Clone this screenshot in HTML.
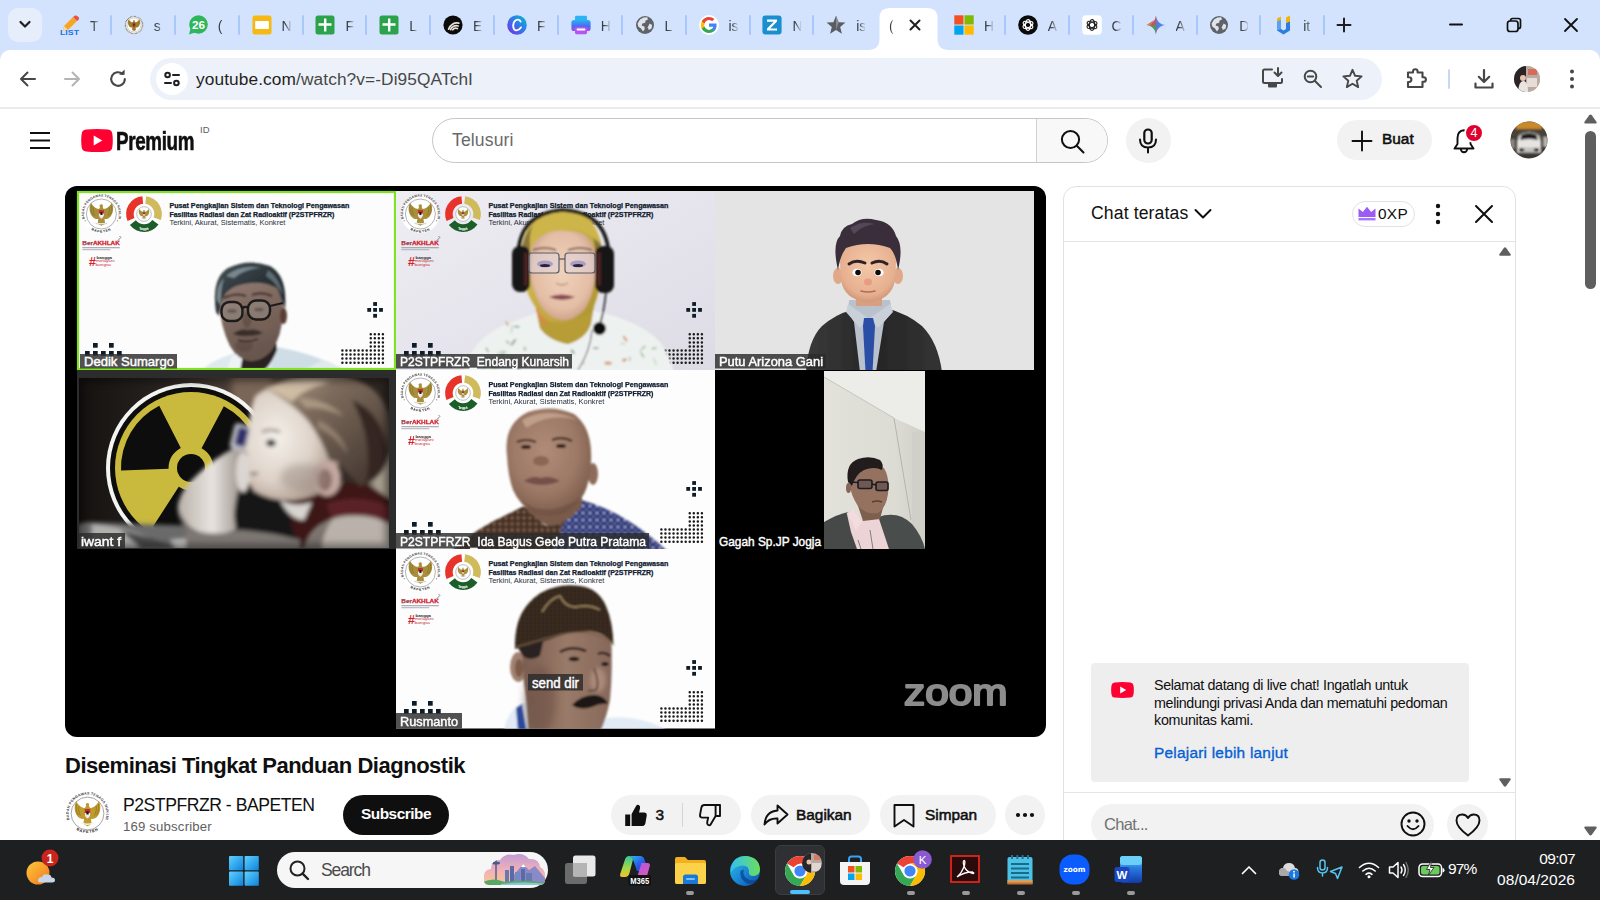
<!DOCTYPE html>
<html lang="id">
<head>
<meta charset="utf-8">
<title>Diseminasi Tingkat Panduan Diagnostik - YouTube</title>
<style>
*{box-sizing:border-box;margin:0;padding:0}
html,body{width:1600px;height:900px;overflow:hidden;background:#fff;font-family:"Liberation Sans",sans-serif;color:#0f0f0f}
.abs{position:absolute}
#root{position:relative;width:1600px;height:900px;overflow:hidden;background:#fff}
/* chrome */
#tabstrip{position:absolute;left:0;top:0;width:1600px;height:62px;background:#d3e3fd}
#toolbar{position:absolute;left:0;top:50px;width:1600px;height:58px;background:#fff;border-radius:10px 10px 0 0}
#tbline{position:absolute;left:0;top:107px;width:1600px;height:2px;background:#ebebeb}
.tab{position:absolute;top:0;height:50px;width:64px}
.tab svg{position:absolute;left:0;top:15px;width:20px;height:20px}
.tab span{position:absolute;left:30px;top:14px;width:9px;height:24px;overflow:hidden;font-size:14px;line-height:24px;color:#3c4043;white-space:nowrap;-webkit-mask-image:linear-gradient(90deg,#000 35%,rgba(0,0,0,.15) 100%);mask-image:linear-gradient(90deg,#000 35%,rgba(0,0,0,.15) 100%)}
.tab i{position:absolute;left:50px;top:15px;width:2px;height:20px;background:#a8c7fa;border-radius:1px}
#omni{position:absolute;left:150px;top:58px;width:1232px;height:42px;border-radius:21px;background:#edf2fa}
#url{position:absolute;left:196px;top:66px;font-size:17.3px;line-height:26px;color:#1f1f1f;white-space:nowrap;letter-spacing:0.1px}
#url b{font-weight:normal;color:#474747}
/* yt */
.pill{position:absolute;background:#f2f2f2;border-radius:20px}
.t{position:absolute;white-space:nowrap}
/* taskbar */
#taskbar{position:absolute;left:0;top:840px;width:1600px;height:60px;background:#1e1f20}
.dot{position:absolute;top:51px;width:8px;height:4px;border-radius:2px;background:#9a9a9a}
</style>
</head>
<body>
<div id="root">
<div id="tabstrip">
<div class="abs" style="left:8px;top:8px;width:34px;height:34px;border-radius:10px;background:#e6eefc"></div>
<svg class="abs" style="left:17px;top:18px" width="16" height="14" viewBox="0 0 16 14"><path d="M3.500 4 L8 8.500 L12.500 4" fill="none" stroke="#1f1f1f" stroke-width="2.200" stroke-linecap="round" stroke-linejoin="round"/></svg>
<div class="tab" style="left:60.0px"><svg viewBox="0 0 20 20"><path d="M4 11 L13 2 L17 6 L8 15 L3 16 Z" fill="#f6a623"/><path d="M13 2 L15 0.6 Q16.5 0 17.6 1.2 L18.8 2.6 Q19.6 4 18.4 5 L17 6 Z" fill="#e8504a"/><path d="M3 16 L4 11 L8 15 Z" fill="#f3d9a8"/><text x="0" y="19.5" font-family="Liberation Sans, sans-serif" font-weight="bold" font-size="7.5" fill="#1a73e8" textLength="19" lengthAdjust="spacingAndGlyphs">LIST</text></svg><span>T</span><i></i></div>
<div class="tab" style="left:123.8px"><svg viewBox="0 0 20 20"><circle cx="10" cy="10" r="9.400" fill="#fff"/><circle cx="10" cy="10" r="8.600" fill="none" stroke="#666" stroke-width="1.400" stroke-dasharray="0.700 0.600"/><circle cx="10" cy="10" r="7" fill="#fff" stroke="#888" stroke-width=".4"/><g transform="translate(10 9.800) scale(0.540)"><path d="M0 -9 C1.500 -9 1.800 -7.500 1.200 -6.500 L2.200 -4.500 C5 -4.500 8 -7 10 -10.500 C12.200 -6 11.500 -1 9 2.500 C7 5 4.500 5.500 3 5 L3.600 9.500 L0 11.500 L-3.600 9.500 L-3 5 C-4.500 5.500 -7 5 -9 2.500 C-11.500 -1 -12.200 -6 -10 -10.500 C-8 -7 -5 -4.500 -2.200 -4.500 L-1.200 -6.500 C-1.800 -7.500 -1.500 -9 0 -9Z" fill="#9a7e2a"/><path d="M-2.400 -3.600 H2.400 V1.400 Q2.400 3.800 0 5 Q-2.400 3.800 -2.400 1.400Z" fill="#c2302a"/><rect x="-1" y="-1.600" width="2" height="2.800" fill="#1a1a1a"/></g></svg><span>s</span><i></i></div>
<div class="tab" style="left:187.7px"><svg viewBox="0 0 20 20"><circle cx="10.5" cy="9.5" r="9.3" fill="#2fb55a"/><path d="M1 19.5 L2.5 13.5 L7 17.5 Z" fill="#2fb55a"/><text x="10.5" y="13.6" text-anchor="middle" font-family="Liberation Sans, sans-serif" font-weight="bold" font-size="11" fill="#fff" textLength="13" lengthAdjust="spacingAndGlyphs">26</text></svg><span>(</span><i></i></div>
<div class="tab" style="left:251.6px"><svg viewBox="0 0 20 20"><rect x="0.5" y="0.5" width="19" height="19" rx="2.5" fill="#f5b912"/><rect x="3.2" y="6" width="13.6" height="8" rx="0.6" fill="#fff"/></svg><span>N</span><i></i></div>
<div class="tab" style="left:315.4px"><svg viewBox="0 0 20 20"><rect x="0.5" y="0.5" width="19" height="19" rx="2.5" fill="#2ba24c"/><path d="M9 3.5 H11.4 V8.3 H16.5 V10.7 H11.4 V16.5 H9 V10.7 H3.5 V8.3 H9 Z" fill="#fff"/></svg><span>F</span><i></i></div>
<div class="tab" style="left:379.2px"><svg viewBox="0 0 20 20"><rect x="0.5" y="0.5" width="19" height="19" rx="2.5" fill="#2ba24c"/><path d="M9 3.5 H11.4 V8.3 H16.5 V10.7 H11.4 V16.5 H9 V10.7 H3.5 V8.3 H9 Z" fill="#fff"/></svg><span>L</span><i></i></div>
<div class="tab" style="left:443.1px"><svg viewBox="0 0 20 20"><circle cx="10" cy="10" r="9.6" fill="#0b0b0b"/><g fill="none" stroke="#e9e3d8" stroke-width="1.7" stroke-linecap="round"><path d="M5.6 14.2 A8.6 8.6 0 0 1 15.8 8.2"/><path d="M7.6 14.6 A6 6 0 0 1 15.2 11"/><path d="M9.8 14.8 A3.6 3.6 0 0 1 14.4 13.6"/></g></svg><span>E</span><i></i></div>
<div class="tab" style="left:506.9px"><svg viewBox="0 0 20 20"><defs><linearGradient id="cv" x1="0" y1="1" x2="1" y2="0"><stop offset="0" stop-color="#7d2ae8"/><stop offset=".55" stop-color="#2f7be8"/><stop offset="1" stop-color="#00c4cc"/></linearGradient></defs><circle cx="10" cy="10" r="9.8" fill="url(#cv)"/><path d="M13.6 6.6 Q12.8 4.4 10.6 4.6 Q6.6 5.2 6.2 10.4 Q6.2 15.2 9.6 15.4 Q12.4 15.2 14 12.4" fill="none" stroke="#fff" stroke-width="1.9" stroke-linecap="round"/></svg><span>F</span><i></i></div>
<div class="tab" style="left:570.8px"><svg viewBox="0 0 20 20"><defs><linearGradient id="pr" x1="0" y1="0" x2="0" y2="1"><stop offset="0" stop-color="#2bb3f3"/><stop offset=".55" stop-color="#4a6cf0"/><stop offset="1" stop-color="#a44cf0"/></linearGradient></defs><rect x="4" y="0.8" width="12" height="6" rx="1.4" fill="#2bb3f3"/><rect x="0.4" y="5" width="19.2" height="11" rx="2.6" fill="url(#pr)"/><rect x="4" y="12" width="12" height="7.2" rx="1.4" fill="#b455ef"/><rect x="5.6" y="13.4" width="8.8" height="2.2" rx="1" fill="#fff"/></svg><span>H</span><i></i></div>
<div class="tab" style="left:634.6px"><svg viewBox="0 0 20 20"><circle cx="10" cy="10" r="9" fill="#5f6368"/><path d="M8.6 2.4 L12.2 2.2 L13 4.6 L10.6 5.6 L10.2 7.8 L7.4 8.4 L6.6 10.4 L9.4 11.4 L9.8 14 L8 16.6 L6 13.4 L3.2 11.6 L2.6 8.4 L5 4.4 Z" fill="#dfe3ea"/><path d="M14.6 8.6 L17.2 10 L16.6 13.4 L13.8 15 L12.8 12.2 Z" fill="#dfe3ea"/></svg><span>L</span><i></i></div>
<div class="tab" style="left:698.5px"><svg viewBox="0 0 20 20"><circle cx="10" cy="10" r="10" fill="#fff"/><path d="M17.6 10.2 c0-.6-.05-1.1-.15-1.6 H10 v3.1 h4.3 c-.2 1-.75 1.8-1.6 2.4 v2 h2.6 c1.5-1.4 2.3-3.4 2.3-5.9z" fill="#4285f4"/><path d="M10 18 c2.15 0 3.95-.7 5.3-1.9 l-2.6-2 c-.7.5-1.65.8-2.7.8 -2.1 0-3.85-1.4-4.5-3.3 H2.8 v2.1 C4.1 16.3 6.85 18 10 18z" fill="#34a853"/><path d="M5.5 11.6 c-.15-.5-.25-1-.25-1.6 s.1-1.100.25-1.600 V6.300 H2.800 C2.300 7.400 2 8.700 2 10 s.3 2.600.8 3.700 l2.700-2.100z" fill="#fbbc05"/><path d="M10 5.100 c1.200 0 2.250.4 3.100 1.200 l2.300-2.300 C14 2.700 12.150 2 10 2 6.850 2 4.100 3.700 2.800 6.300 l2.700 2.100 C6.150 6.500 7.900 5.100 10 5.100z" fill="#ea4335"/></svg><span>is</span><i></i></div>
<div class="tab" style="left:762.4px"><svg viewBox="0 0 20 20"><rect x="0.4" y="0.4" width="19.200" height="19.200" rx="3" fill="#1a8fd0"/><path d="M5 4.600 H15 V6.600 L8.200 13.400 H15 V15.600 H5 V13.600 L11.800 6.800 H5 Z" fill="#fff"/></svg><span>N</span><i></i></div>
<div class="tab" style="left:826.2px"><svg viewBox="0 0 20 20"><path d="M10 0.800 L12.600 7.200 L19.400 7.600 L14.200 12 L15.900 18.800 L10 15.100 L4.100 18.800 L5.800 12 L0.600 7.600 L7.400 7.200 Z" fill="#5a5d62"/><path d="M10 0.800 L12.600 7.200 L10 15.100 Z" fill="#8a8d92"/></svg><span>is</span></div>
<div class="tab" style="left:953.9px"><svg viewBox="0 0 20 20"><rect x="0.300" y="0.300" width="9.200" height="9.200" fill="#f25022"/><rect x="10.500" y="0.300" width="9.200" height="9.200" fill="#7fba00"/><rect x="0.300" y="10.500" width="9.200" height="9.200" fill="#00a4ef"/><rect x="10.500" y="10.500" width="9.200" height="9.200" fill="#ffb900"/></svg><span>H</span><i></i></div>
<div class="tab" style="left:1017.8px"><svg viewBox="0 0 20 20"><circle cx="10" cy="10" r="9.800" fill="#0b0b0b"/><g fill="none" stroke="#fff" stroke-width="1.100"><ellipse cx="10" cy="10" rx="2.600" ry="5.400"/><ellipse cx="10" cy="10" rx="2.600" ry="5.400" transform="rotate(60 10 10)"/><ellipse cx="10" cy="10" rx="2.600" ry="5.400" transform="rotate(120 10 10)"/></g></svg><span>A</span><i></i></div>
<div class="tab" style="left:1081.6px"><svg viewBox="0 0 20 20"><rect x="0.200" y="0.200" width="19.600" height="19.600" rx="4" fill="#fff"/><g fill="none" stroke="#222" stroke-width="1.100"><ellipse cx="10" cy="10" rx="2.600" ry="5.400"/><ellipse cx="10" cy="10" rx="2.600" ry="5.400" transform="rotate(60 10 10)"/><ellipse cx="10" cy="10" rx="2.600" ry="5.400" transform="rotate(120 10 10)"/></g></svg><span>C</span><i></i></div>
<div class="tab" style="left:1145.5px"><svg viewBox="0 0 20 20"><defs><linearGradient id="gm" x1="0" y1="0" x2="1" y2="1"><stop offset="0" stop-color="#ea4335"/><stop offset=".35" stop-color="#f9ab00"/><stop offset=".6" stop-color="#34a853"/><stop offset="1" stop-color="#4285f4"/></linearGradient><linearGradient id="gm2" x1="0" y1="0" x2="1" y2="0"><stop offset="0" stop-color="#f9ab00"/><stop offset=".3" stop-color="#ea4335"/><stop offset=".65" stop-color="#4285f4"/><stop offset="1" stop-color="#4285f4"/></linearGradient></defs><path d="M10 0.400 C10.600 6 14 9.400 19.600 10 C14 10.600 10.600 14 10 19.600 C9.400 14 6 10.600 0.400 10 C6 9.400 9.400 6 10 0.400Z" fill="url(#gm2)"/><path d="M10 10 L10 19.600 C9.400 14 6 10.600 0.400 10 Z" fill="#34a853" opacity=".85"/><path d="M0.400 10 C6 9.400 9.400 6 10 0.400 L10 4 Z" fill="#ea4335" opacity=".8"/></svg><span>A</span><i></i></div>
<div class="tab" style="left:1209.3px"><svg viewBox="0 0 20 20"><circle cx="10" cy="10" r="9" fill="#5f6368"/><path d="M8.6 2.4 L12.2 2.2 L13 4.6 L10.6 5.6 L10.2 7.8 L7.4 8.4 L6.6 10.4 L9.4 11.4 L9.8 14 L8 16.6 L6 13.4 L3.2 11.6 L2.6 8.4 L5 4.4 Z" fill="#dfe3ea"/><path d="M14.6 8.6 L17.2 10 L16.6 13.4 L13.8 15 L12.8 12.2 Z" fill="#dfe3ea"/></svg><span>D</span><i></i></div>
<div class="tab" style="left:1273.2px"><svg viewBox="0 0 20 20"><path d="M4 6.500 L8 4.500 V14 L10.500 15.600 L13 14 V8 L17 6 V15.600 L10.500 19.600 L4 15.600 Z" fill="#2d7de0"/><path d="M4 6.500 L8 4.500 V14 L4 15.600Z" fill="#5aa2f0"/><path d="M4 3.600 L8 1.600 V4.600 L4 6.600Z" fill="#f5b400"/><path d="M13 2.400 L17 0.400 V6 L13 8Z" fill="#f5b400"/></svg><span>it</span><i></i></div>
<svg class="abs" style="left:868px;top:0" width="82" height="50" viewBox="0 0 82 50"><path d="M0 50 Q11.500 50 11.500 38.500 V18 Q11.500 8 21.500 8 H59.500 Q69.500 8 69.500 18 V38.500 Q69.500 50 81 50 Z" fill="#fff"/></svg>
<div class="tab" style="left:860px"><span style="left:29px;width:5px">(</span></div>
<svg class="abs" style="left:908px;top:18px" width="14" height="14" viewBox="0 0 14 14"><path d="M2.500 2.500 L11.500 11.500 M11.500 2.500 L2.500 11.500" stroke="#1f1f1f" stroke-width="2" stroke-linecap="round"/></svg>
<svg class="abs" style="left:1336px;top:17px" width="16" height="16" viewBox="0 0 16 16"><path d="M8 1.500 V14.500 M1.500 8 H14.500" stroke="#1f1f1f" stroke-width="2" stroke-linecap="round"/></svg>
<svg class="abs" style="left:1449px;top:23px" width="14" height="3" viewBox="0 0 14 3"><rect width="14" height="2" y="0.5" rx="1" fill="#111"/></svg>
<svg class="abs" style="left:1506px;top:17px" width="16" height="16" viewBox="0 0 16 16"><rect x="1.500" y="4" width="10.500" height="10.500" rx="2.600" fill="none" stroke="#111" stroke-width="1.700"/><path d="M4.600 4 V3.500 Q4.600 1.500 6.600 1.500 H12.500 Q14.500 1.500 14.500 3.500 V9.400 Q14.500 11.400 12.500 11.400 H12" fill="none" stroke="#111" stroke-width="1.700"/></svg>
<svg class="abs" style="left:1563px;top:17px" width="16" height="16" viewBox="0 0 16 16"><path d="M2 2 L14 14 M14 2 L2 14" stroke="#111" stroke-width="1.800" stroke-linecap="round"/></svg>
</div>
<div id="toolbar"></div><div id="tbline"></div>
<svg class="abs" style="left:18px;top:69px" width="20" height="20" viewBox="0 0 20 20"><path d="M17 10 H3.500 M9.500 3.500 L3 10 L9.500 16.500" fill="none" stroke="#474747" stroke-width="2" stroke-linecap="round" stroke-linejoin="round"/></svg>
<svg class="abs" style="left:62px;top:69px" width="20" height="20" viewBox="0 0 20 20"><path d="M3 10 H16.500 M10.500 3.500 L17 10 L10.500 16.500" fill="none" stroke="#b4b4b4" stroke-width="2" stroke-linecap="round" stroke-linejoin="round"/></svg>
<svg class="abs" style="left:107px;top:68px" width="22" height="22" viewBox="0 0 22 22"><path d="M17.800 11 A6.800 6.800 0 1 1 15.600 6" fill="none" stroke="#474747" stroke-width="2.100" stroke-linecap="round"/><path d="M12.200 6.800 H17.600 V1.600 Z" fill="#474747"/></svg>
<div id="omni"></div>
<div class="abs" style="left:156px;top:63px;width:32px;height:32px;border-radius:16px;background:#fff"></div>
<svg class="abs" style="left:162px;top:69px" width="20" height="20" viewBox="0 0 20 20"><g fill="none" stroke="#1f1f1f" stroke-width="2" stroke-linecap="round"><circle cx="5.600" cy="6" r="2.300"/><path d="M11 6 H17"/><circle cx="14.400" cy="14" r="2.300"/><path d="M3 14 H9"/></g></svg>
<div id="url" class="t">youtube.com<b>/watch?v=-Di95QATchI</b></div>
<svg class="abs" style="left:1261px;top:66px" width="24" height="24" viewBox="0 0 24 24"><g fill="none" stroke="#474747" stroke-width="2" stroke-linejoin="round" stroke-linecap="round"><path d="M11 3.500 H3.500 Q2 3.500 2 5 V15.500 Q2 17 3.500 17 H19.500 Q21 17 21 15.500 V13"/><path d="M8 20.500 H15"/><path d="M17 2 V9.500 M13.500 6.500 L17 10 L20.500 6.500"/></g><rect x="7" y="17" width="9" height="3.500" fill="#474747"/></svg>
<svg class="abs" style="left:1302px;top:68px" width="22" height="22" viewBox="0 0 22 22"><g fill="none" stroke="#474747" stroke-width="2" stroke-linecap="round"><circle cx="8.500" cy="8.500" r="5.800"/><path d="M13 13 L19 19"/><path d="M5.800 8.500 H11.200"/></g></svg>
<svg class="abs" style="left:1341px;top:67px" width="23" height="23" viewBox="0 0 23 23"><path d="M11.500 2.800 L14.100 8.800 L20.600 9.400 L15.700 13.700 L17.200 20.100 L11.500 16.700 L5.800 20.100 L7.300 13.700 L2.400 9.400 L8.900 8.800 Z" fill="none" stroke="#474747" stroke-width="1.900" stroke-linejoin="round"/></svg>
<svg class="abs" style="left:1404px;top:66px" width="25" height="25" viewBox="0 0 25 25"><path d="M4 6.500 H9 V5.500 A2.300 2.300 0 0 1 13.600 5.500 V6.500 H18.500 V11.200 H19.600 A2.300 2.300 0 0 1 19.600 15.800 H18.500 V21 H4 V16 H5 A2.400 2.400 0 0 0 5 11.200 H4 Z" fill="none" stroke="#474747" stroke-width="2.100" stroke-linejoin="round"/></svg>
<div class="abs" style="left:1448px;top:69px;width:2px;height:20px;border-radius:1px;background:#c7d9f7"></div>
<svg class="abs" style="left:1472px;top:67px" width="24" height="24" viewBox="0 0 24 24"><g fill="none" stroke="#474747" stroke-width="2.200" stroke-linecap="round" stroke-linejoin="round"><path d="M12 3 V14.500 M6.800 9.800 L12 15 L17.200 9.800"/><path d="M3.500 16.500 V20.500 H20.500 V16.500"/></g></svg>
<svg class="abs" style="left:1514px;top:66px" width="26" height="26" viewBox="0 0 26 26"><defs><clipPath id="pfc"><circle cx="13" cy="13" r="13"/></clipPath></defs><g clip-path="url(#pfc)"><rect width="26" height="26" fill="#c9c2bd"/><rect x="0" y="0" width="12" height="26" fill="#2a2424"/><rect x="12" y="0" width="14" height="26" fill="#b9aaa4"/><rect x="14" y="3" width="9" height="6" fill="#d86a5a"/><rect x="13" y="12" width="10" height="9" fill="#e8ddd6"/><circle cx="9" cy="12" r="3" fill="#e4c4b0"/><path d="M4 26 Q5 15 9 15 Q14 15 14 26Z" fill="#e9e4e0"/></g></svg>
<svg class="abs" style="left:1568px;top:68px" width="8" height="22" viewBox="0 0 8 22"><circle cx="4" cy="3.500" r="2" fill="#474747"/><circle cx="4" cy="11" r="2" fill="#474747"/><circle cx="4" cy="18.500" r="2" fill="#474747"/></svg>
<!-- YouTube masthead -->
<svg class="abs" style="left:29px;top:131px" width="22" height="19" viewBox="0 0 22 19"><path d="M1 2 H21 M1 9.500 H21 M1 17 H21" stroke="#0f0f0f" stroke-width="1.800"/></svg>
<svg class="abs" style="left:81px;top:129px" width="32" height="23" viewBox="0 0 32 23"><path d="M5 0.600 Q16 -0.400 27 0.600 Q30.800 1 31.300 4.800 Q32.300 11.500 31.300 18.200 Q30.800 22 27 22.400 Q16 23.400 5 22.400 Q1.200 22 0.700 18.200 Q-0.300 11.500 0.700 4.800 Q1.200 1 5 0.600Z" fill="#ff0033"/><path d="M12.700 6.500 L21.300 11.500 L12.700 16.500Z" fill="#fff"/></svg>
<div id="prem" class="t" style="left:116px;top:125px;font-size:26px;line-height:32px;font-weight:bold;letter-spacing:-0.5px;transform:scaleX(0.724);transform-origin:0 0;color:#0f0f0f;-webkit-text-stroke:0.6px #0f0f0f">Premium</div>
<div class="t" style="left:200px;top:124px;font-size:9.500px;line-height:12px;color:#606060">ID</div>
<!-- search -->
<div class="abs" style="left:432px;top:118px;width:676px;height:45px;border-radius:23px;border:1px solid #c6c6c6;background:#fff"></div>
<div class="abs" style="left:1036px;top:119px;width:71px;height:43px;border-radius:0 22px 22px 0;border-left:1px solid #d3d3d3;background:#f8f8f8"></div>
<div id="telus" class="t" style="left:452px;top:129px;font-size:17.600px;line-height:22px;color:#6a6a6a;letter-spacing:0.125px">Telusuri</div>
<svg class="abs" style="left:1059px;top:128px" width="26" height="26" viewBox="0 0 26 26"><circle cx="11.500" cy="11.500" r="8.600" fill="none" stroke="#0f0f0f" stroke-width="2"/><path d="M17.800 17.800 L24.500 24.500" stroke="#0f0f0f" stroke-width="2" stroke-linecap="round"/></svg>
<div class="abs" style="left:1126px;top:118px;width:45px;height:45px;border-radius:23px;background:#f2f2f2"></div>
<svg class="abs" style="left:1137px;top:128px" width="22" height="26" viewBox="0 0 22 26"><rect x="7.300" y="1.500" width="7.400" height="14" rx="3.700" fill="none" stroke="#0f0f0f" stroke-width="2.200"/><path d="M3 11.500 Q3 19.500 11 19.500 Q19 19.500 19 11.500 M11 19.500 V24.500" fill="none" stroke="#0f0f0f" stroke-width="2" stroke-linecap="round"/></svg>
<!-- Buat -->
<div class="pill" style="left:1337px;top:120px;width:95px;height:40px"></div>
<svg class="abs" style="left:1351px;top:130px" width="22" height="22" viewBox="0 0 22 22"><path d="M11 1.500 V20.500 M1.500 11 H20.500" stroke="#0f0f0f" stroke-width="1.900" stroke-linecap="round"/></svg>
<div id="buat" class="t" style="left:1382px;top:129px;font-size:15.400px;line-height:20px;font-weight:normal;-webkit-text-stroke:0.55px #0f0f0f;letter-spacing:0px">Buat</div>
<!-- bell -->
<svg class="abs" style="left:1451px;top:127px" width="26" height="28" viewBox="0 0 26 28"><path d="M13 3.200 Q19.500 3.800 19.500 11 V17 L22.500 21.500 H3.500 L6.500 17 V11 Q6.500 3.800 13 3.200Z" fill="none" stroke="#0f0f0f" stroke-width="1.900" stroke-linejoin="round"/><path d="M9.800 22 A3.200 3.200 0 0 0 16.200 22" fill="none" stroke="#0f0f0f" stroke-width="1.900"/></svg>
<div class="abs" style="left:1464px;top:123px;width:20px;height:20px;border-radius:10px;background:#e1002d;border:2px solid #fff"></div>
<div class="t" style="left:1464px;top:123px;width:20px;text-align:center;font-size:12.500px;line-height:20px;color:#fff">4</div>
<!-- avatar car -->
<svg class="abs" style="left:1510px;top:121px" width="38" height="38" viewBox="0 0 38 38"><defs><clipPath id="avc"><circle cx="19" cy="19" r="18.500"/></clipPath><filter id="b1"><feGaussianBlur stdDeviation="0.8"/></filter></defs><g clip-path="url(#avc)"><rect width="38" height="38" fill="#3a3630"/><g filter="url(#b1)"><rect x="6" y="0" width="26" height="10" fill="#c88a2a"/><rect x="0" y="8" width="38" height="8" fill="#4a4238"/><path d="M7 32 V21 Q7 17 11 13 Q19 9.500 27 13 Q31 17 31 21 V32Z" fill="#e6e4e0"/><path d="M11.500 13.500 Q19 10.500 26.500 13.500 L28 19 Q19 17 10 19Z" fill="#1c1c1e"/><rect x="9" y="27" width="20" height="4" fill="#2a2a2a"/><rect x="14" y="27.500" width="10" height="2.600" fill="#ddd"/><rect x="0" y="18" width="5" height="10" fill="#8a8680"/><rect x="33" y="16" width="5" height="10" fill="#b8b4ae"/></g></g></svg>
<!-- page scrollbar -->
<svg class="abs" style="left:1583px;top:113px" width="15" height="12" viewBox="0 0 15 12"><path d="M7.500 1.500 Q8.200 1.500 8.800 2.300 L13.600 9 Q14.200 10.400 12.800 10.500 H2.200 Q0.800 10.400 1.400 9 L6.200 2.300 Q6.800 1.500 7.500 1.500Z" fill="#5f5f5f"/></svg>
<div class="abs" style="left:1585px;top:131px;width:11px;height:158px;border-radius:6px;background:#5e5e5e"></div>
<svg class="abs" style="left:1583px;top:825px" width="15" height="12" viewBox="0 0 15 12"><path d="M7.500 10.500 Q8.200 10.500 8.800 9.700 L13.600 3 Q14.200 1.600 12.800 1.500 H2.200 Q0.800 1.600 1.400 3 L6.200 9.700 Q6.800 10.500 7.500 10.500Z" fill="#5f5f5f"/></svg>
<!-- video -->
<div id="video" class="abs" style="left:65px;top:186px;width:981px;height:551px;border-radius:12px;background:#000;overflow:hidden">
<svg width="981" height="551" viewBox="65 186 981 551" style="position:absolute;left:0;top:0">
<defs>
<path id="sealTop" d="M-16.600 5.400 A17.450 17.450 0 1 1 16.600 5.400"/>
<path id="sealBot" d="M-13.500 12.800 A18.600 18.600 0 0 0 13.500 12.800"/>
<filter id="bl1" x="-10%" y="-10%" width="120%" height="120%"><feGaussianBlur stdDeviation="1"/></filter>
<filter id="bl2" x="-10%" y="-10%" width="120%" height="120%"><feGaussianBlur stdDeviation="2"/></filter>
<filter id="bl3" x="-20%" y="-20%" width="140%" height="140%"><feGaussianBlur stdDeviation="3.500"/></filter>
<filter id="bl6" x="-20%" y="-20%" width="140%" height="140%"><feGaussianBlur stdDeviation="7"/></filter>
<filter id="bl05" x="-10%" y="-10%" width="120%" height="120%"><feGaussianBlur stdDeviation="0.550"/></filter>
<clipPath id="c1"><rect x="77" y="191" width="319" height="179"/></clipPath>
<clipPath id="c2"><rect x="396" y="191" width="319" height="179"/></clipPath>
<clipPath id="c3"><rect x="715" y="191" width="319" height="179"/></clipPath>
<clipPath id="c4"><rect x="77" y="370" width="319" height="179"/></clipPath>
<clipPath id="c5"><rect x="396" y="370" width="319" height="179"/></clipPath>
<clipPath id="c6"><rect x="824" y="371" width="101" height="178"/></clipPath>
<clipPath id="c8"><rect x="396" y="549" width="319" height="179.500"/></clipPath>
<linearGradient id="g2bg" x1="0" y1="0" x2="1" y2="1"><stop offset="0" stop-color="#efeef3"/><stop offset=".5" stop-color="#e6e4ec"/><stop offset="1" stop-color="#dddbe4"/></linearGradient>
<linearGradient id="hairD" x1="0" y1="0" x2="1" y2="1"><stop offset="0" stop-color="#465258"/><stop offset=".5" stop-color="#2a3338"/><stop offset="1" stop-color="#20262a"/></linearGradient>
<linearGradient id="faceD" x1="0" y1="0" x2="0.300" y2="1"><stop offset="0" stop-color="#96807a"/><stop offset=".45" stop-color="#806a60"/><stop offset="1" stop-color="#68564e"/></linearGradient>
<radialGradient id="faceE" cx=".5" cy=".45" r=".6"><stop offset="0" stop-color="#f0d2bc"/><stop offset=".7" stop-color="#e4bea6"/><stop offset="1" stop-color="#c89a80"/></radialGradient>
<linearGradient id="hij" x1="0" y1="0" x2="1" y2="1"><stop offset="0" stop-color="#d6bf55"/><stop offset=".6" stop-color="#c2a840"/><stop offset="1" stop-color="#a08828"/></linearGradient>
<radialGradient id="faceA" cx=".5" cy=".4" r=".65"><stop offset="0" stop-color="#f4c8a8"/><stop offset=".75" stop-color="#e6b090"/><stop offset="1" stop-color="#c88e70"/></radialGradient>
<linearGradient id="jackA" x1="0" y1="0" x2="1" y2="0"><stop offset="0" stop-color="#3a3a3a"/><stop offset=".5" stop-color="#262626"/><stop offset="1" stop-color="#333"/></linearGradient>
<linearGradient id="t4bg" x1="0" y1="0" x2="1" y2="0"><stop offset="0" stop-color="#14110f"/><stop offset=".3" stop-color="#2a2522"/><stop offset=".55" stop-color="#5a4c42"/><stop offset=".75" stop-color="#3a302a"/><stop offset="1" stop-color="#2a2420"/></linearGradient>
<radialGradient id="babyF" cx=".35" cy=".45" r=".7"><stop offset="0" stop-color="#f4f0ea"/><stop offset=".55" stop-color="#ddd2c8"/><stop offset="1" stop-color="#a08a7c"/></radialGradient>
<linearGradient id="babyH" x1="0" y1="0" x2="1" y2="1"><stop offset="0" stop-color="#b8a48e"/><stop offset=".35" stop-color="#7c6a5c"/><stop offset="1" stop-color="#3a2e28"/></linearGradient>
<linearGradient id="armG" x1="0" y1="0" x2="1" y2="0"><stop offset="0" stop-color="#b8b0aa"/><stop offset=".5" stop-color="#e8e4e0"/><stop offset="1" stop-color="#8a807a"/></linearGradient>
<clipPath id="c4i"><rect x="79" y="378" width="310" height="170"/></clipPath>
<radialGradient id="faceI" cx=".45" cy=".4" r=".65"><stop offset="0" stop-color="#b08c78"/><stop offset=".6" stop-color="#9c7966"/><stop offset="1" stop-color="#7a5a4a"/></radialGradient>
<pattern id="batikB" width="7" height="7" patternUnits="userSpaceOnUse"><rect width="7" height="7" fill="#34407e"/><circle cx="2" cy="2" r="1.300" fill="#aab0d6"/><circle cx="5.500" cy="5.500" r="1" fill="#7a84b8"/></pattern>
<pattern id="batikR" width="6" height="6" patternUnits="userSpaceOnUse"><rect width="6" height="6" fill="#4e382c"/><circle cx="2" cy="2" r="1.200" fill="#8a6a50"/><circle cx="5" cy="4.500" r="0.900" fill="#2a1c16"/></pattern>
<linearGradient id="wall6" x1="0" y1="0" x2="1" y2="0"><stop offset="0" stop-color="#e2e2da"/><stop offset=".7" stop-color="#dcdcd4"/><stop offset="1" stop-color="#cfcfc8"/></linearGradient>
<linearGradient id="faceR" x1="0" y1="0" x2="1" y2="0"><stop offset="0" stop-color="#7a5e50"/><stop offset=".5" stop-color="#9a7a68"/><stop offset="1" stop-color="#86685a"/></linearGradient>
<pattern id="capP" width="4" height="4" patternUnits="userSpaceOnUse"><rect width="4" height="4" fill="#33261c"/><circle cx="1" cy="1" r="0.800" fill="#5a4632"/><circle cx="3" cy="3" r="0.700" fill="#241a12"/></pattern>
</defs>
<g clip-path="url(#c1)">
<rect x="77" y="191" width="319" height="179" fill="#fcfcfc"/>
<circle cx="101.4" cy="214.0" r="19.200" fill="#fff"/>
<circle cx="101.4" cy="214.0" r="15" fill="none" stroke="#666" stroke-width="0.500"/>
<g transform="translate(101.4 214.0)"><text font-family="Liberation Sans, sans-serif" font-weight="bold" font-size="3.300" fill="#3c3c3c" letter-spacing="0.150"><textPath href="#sealTop" startOffset="50%" text-anchor="middle">BADAN PENGAWAS TENAGA NUKLIR</textPath></text><text font-family="Liberation Sans, sans-serif" font-weight="bold" font-size="3.400" fill="#222" letter-spacing="0.700"><textPath href="#sealBot" startOffset="50%" text-anchor="middle">BAPETEN</textPath></text><circle cx="-16.300" cy="6.800" r="0.500" fill="#444"/><circle cx="16.300" cy="6.800" r="0.500" fill="#444"/></g>
<g transform="translate(101.40 213.70) scale(1.040)"><path d="M0 -9 C1.500 -9 1.800 -7.500 1.200 -6.500 L2.200 -4.500 C5 -4.500 8 -7 10 -10.500 C12.200 -6 11.500 -1 9 2.500 C7 5 4.500 5.500 3 5 L3.600 9.500 L0 11.500 L-3.600 9.500 L-3 5 C-4.500 5.500 -7 5 -9 2.500 C-11.500 -1 -12.200 -6 -10 -10.500 C-8 -7 -5 -4.500 -2.200 -4.500 L-1.200 -6.500 C-1.800 -7.500 -1.500 -9 0 -9Z" fill="#a8903a"/><path d="M9.600 -8 C10.400 -4 9.800 -1 8 1.800 M7.600 -6.200 C8.200 -3 7.600 -0.500 6.200 2 M-9.600 -8 C-10.400 -4 -9.800 -1 -8 1.800 M-7.600 -6.200 C-8.200 -3 -7.600 -0.500 -6.200 2" fill="none" stroke="#7a6420" stroke-width="0.500"/><path d="M-1.400 -8 L-2.600 -7.400 L-1.200 -7.100Z" fill="#a8903a"/><path d="M-2.400 -3.600 H2.400 V1.400 Q2.400 3.800 0 5 Q-2.400 3.800 -2.400 1.400Z" fill="#c2302a"/><path d="M-2.400 -0.200 H2.400 V1.400 Q2.400 3.800 0 5 Q-2.400 3.800 -2.400 1.400Z" fill="#f0ece4"/><rect x="-1" y="-1.600" width="2" height="2.800" fill="#1a1a1a"/><path d="M-5.600 8.600 Q0 11 5.600 8.600" fill="none" stroke="#f4f4f0" stroke-width="1.300"/><path d="M-5.600 8.600 Q0 11 5.600 8.600" fill="none" stroke="#777" stroke-width="0.300" transform="translate(0 0.800)"/></g>
<path d="M127.52 220.99 A17.90 17.90 0 0 1 142.44 196.17 L143.10 203.74 A10.30 10.30 0 0 0 134.52 218.02 Z" fill="#e8332a"/>
<path d="M146.18 196.23 A17.90 17.90 0 0 1 160.82 220.12 L153.68 217.52 A10.30 10.30 0 0 0 145.26 203.78 Z" fill="#cfba5c"/>
<path d="M158.48 224.52 A17.90 17.90 0 0 1 129.89 225.02 L135.88 220.34 A10.30 10.30 0 0 0 152.33 220.05 Z" fill="#1b5e2a"/>
<circle cx="144.0" cy="214.0" r="7.300" fill="#fff" stroke="#b0b0b8" stroke-width="0.800"/>
<g transform="translate(144.00 213.80) scale(0.460)"><path d="M0 -9 C1.500 -9 1.800 -7.500 1.200 -6.500 L2.200 -4.500 C5 -4.500 8 -7 10 -10.500 C12.200 -6 11.500 -1 9 2.500 C7 5 4.500 5.500 3 5 L3.600 9.500 L0 11.500 L-3.600 9.500 L-3 5 C-4.500 5.500 -7 5 -9 2.500 C-11.500 -1 -12.200 -6 -10 -10.500 C-8 -7 -5 -4.500 -2.200 -4.500 L-1.200 -6.500 C-1.800 -7.500 -1.500 -9 0 -9Z" fill="#a8903a"/><path d="M-2.400 -3.600 H2.400 V1.400 Q2.400 3.800 0 5 Q-2.400 3.800 -2.400 1.400Z" fill="#c2302a"/><path d="M-2.400 -0.200 H2.400 V1.400 Q2.400 3.800 0 5 Q-2.400 3.800 -2.400 1.400Z" fill="#f0ece4"/><rect x="-1" y="-1.600" width="2" height="2.800" fill="#1a1a1a"/><path d="M-5.600 8.600 Q0 11 5.600 8.600" fill="none" stroke="#f4f4f0" stroke-width="1.300"/><path d="M-5.600 8.600 Q0 11 5.600 8.600" fill="none" stroke="#777" stroke-width="0.300" transform="translate(0 0.800)"/></g>
<text x="144.0" y="230.3" text-anchor="middle" font-family="Liberation Sans, sans-serif" font-weight="bold" font-size="3.200" fill="#f0f6ea" textLength="9.500">Tangguh</text>
<text x="169.4" y="207.9" font-family="Liberation Sans, sans-serif" font-weight="bold" font-size="6.500" fill="#101c30" stroke="#101c30" stroke-width="0.250" textLength="180" lengthAdjust="spacingAndGlyphs">Pusat Pengkajian Sistem dan Teknologi Pengawasan</text>
<text x="169.4" y="216.7" font-family="Liberation Sans, sans-serif" font-weight="bold" font-size="6.500" fill="#101c30" stroke="#101c30" stroke-width="0.250" textLength="165" lengthAdjust="spacingAndGlyphs">Fasilitas Radiasi dan Zat Radioaktif (P2STPFRZR)</text>
<text x="169.4" y="225.2" font-family="Liberation Sans, sans-serif" font-size="6.600" fill="#2a3340" textLength="116" lengthAdjust="spacingAndGlyphs">Terkini, Akurat, Sistematis, Konkret</text>
<text x="82.3" y="245.3" font-family="Liberation Sans, sans-serif" font-weight="bold" font-size="6.200" textLength="37.500" lengthAdjust="spacingAndGlyphs"><tspan fill="#a83a4a" stroke="#a83a4a" stroke-width="0.250">Ber</tspan><tspan fill="#d0242e" stroke="#d0242e" stroke-width="0.300">AKHLAK</tspan></text>
<path d="M117.5 241.0 l3.400 -3.600 l-1.400 -1.400" fill="none" stroke="#3a3a3a" stroke-width="0.600"/>
<rect x="82.3" y="247.3" width="37.500" height="0.900" fill="#8a9098"/>
<rect x="82.3" y="249.3" width="28" height="0.900" fill="#a0a6ae"/>
<text x="88.8" y="266.0" font-family="Liberation Sans, sans-serif" font-weight="bold" font-style="italic" font-size="12.500" fill="#d0242e">#</text>
<text x="96.5" y="258.6" font-family="Liberation Sans, sans-serif" font-weight="bold" font-size="3.800" fill="#2a2a2a" textLength="15.500" lengthAdjust="spacingAndGlyphs">bangga</text>
<text x="96.0" y="262.3" font-family="Liberation Sans, sans-serif" font-size="3.800" fill="#c8323a" textLength="18.500" lengthAdjust="spacingAndGlyphs">melayani</text>
<text x="95.5" y="266.0" font-family="Liberation Sans, sans-serif" font-size="3.800" fill="#c8323a" textLength="15.500" lengthAdjust="spacingAndGlyphs">bangsa</text>
<rect x="93.0" y="343.0" width="4.700" height="4.700" fill="#0c1c28"/>
<rect x="109.0" y="343.0" width="4.700" height="4.700" fill="#0c1c28"/>
<rect x="85.0" y="351.0" width="4.700" height="4.700" fill="#0c1c28"/>
<rect x="93.0" y="351.0" width="4.700" height="4.700" fill="#0c1c28"/>
<rect x="101.0" y="351.0" width="4.700" height="4.700" fill="#0c1c28"/>
<rect x="109.0" y="351.0" width="4.700" height="4.700" fill="#0c1c28"/>
<rect x="117.0" y="351.0" width="4.700" height="4.700" fill="#0c1c28"/>
<rect x="373.2" y="308.0" width="3.800" height="3.800" fill="#0c1c28"/>
<rect x="367.3" y="308.0" width="3.800" height="3.800" fill="#0c1c28"/>
<rect x="379.1" y="308.0" width="3.800" height="3.800" fill="#0c1c28"/>
<rect x="373.2" y="302.1" width="3.800" height="3.800" fill="#0c1c28"/>
<rect x="373.2" y="313.9" width="3.800" height="3.800" fill="#0c1c28"/>
<path d="M369.50 334.30a1.250 1.250 0 1 0 2.500 0a1.250 1.250 0 1 0 -2.500 0zM373.55 334.30a1.250 1.250 0 1 0 2.500 0a1.250 1.250 0 1 0 -2.500 0zM377.60 334.30a1.250 1.250 0 1 0 2.500 0a1.250 1.250 0 1 0 -2.500 0zM381.65 334.30a1.250 1.250 0 1 0 2.500 0a1.250 1.250 0 1 0 -2.500 0zM369.50 338.35a1.250 1.250 0 1 0 2.500 0a1.250 1.250 0 1 0 -2.500 0zM373.55 338.35a1.250 1.250 0 1 0 2.500 0a1.250 1.250 0 1 0 -2.500 0zM377.60 338.35a1.250 1.250 0 1 0 2.500 0a1.250 1.250 0 1 0 -2.500 0zM381.65 338.35a1.250 1.250 0 1 0 2.500 0a1.250 1.250 0 1 0 -2.500 0zM369.50 342.40a1.250 1.250 0 1 0 2.500 0a1.250 1.250 0 1 0 -2.500 0zM373.55 342.40a1.250 1.250 0 1 0 2.500 0a1.250 1.250 0 1 0 -2.500 0zM377.60 342.40a1.250 1.250 0 1 0 2.500 0a1.250 1.250 0 1 0 -2.500 0zM381.65 342.40a1.250 1.250 0 1 0 2.500 0a1.250 1.250 0 1 0 -2.500 0zM369.50 346.45a1.250 1.250 0 1 0 2.500 0a1.250 1.250 0 1 0 -2.500 0zM373.55 346.45a1.250 1.250 0 1 0 2.500 0a1.250 1.250 0 1 0 -2.500 0zM377.60 346.45a1.250 1.250 0 1 0 2.500 0a1.250 1.250 0 1 0 -2.500 0zM381.65 346.45a1.250 1.250 0 1 0 2.500 0a1.250 1.250 0 1 0 -2.500 0zM341.15 350.50a1.250 1.250 0 1 0 2.500 0a1.250 1.250 0 1 0 -2.500 0zM345.20 350.50a1.250 1.250 0 1 0 2.500 0a1.250 1.250 0 1 0 -2.500 0zM349.25 350.50a1.250 1.250 0 1 0 2.500 0a1.250 1.250 0 1 0 -2.500 0zM353.30 350.50a1.250 1.250 0 1 0 2.500 0a1.250 1.250 0 1 0 -2.500 0zM357.35 350.50a1.250 1.250 0 1 0 2.500 0a1.250 1.250 0 1 0 -2.500 0zM361.40 350.50a1.250 1.250 0 1 0 2.500 0a1.250 1.250 0 1 0 -2.500 0zM365.45 350.50a1.250 1.250 0 1 0 2.500 0a1.250 1.250 0 1 0 -2.500 0zM369.50 350.50a1.250 1.250 0 1 0 2.500 0a1.250 1.250 0 1 0 -2.500 0zM373.55 350.50a1.250 1.250 0 1 0 2.500 0a1.250 1.250 0 1 0 -2.500 0zM377.60 350.50a1.250 1.250 0 1 0 2.500 0a1.250 1.250 0 1 0 -2.500 0zM381.65 350.50a1.250 1.250 0 1 0 2.500 0a1.250 1.250 0 1 0 -2.500 0zM341.15 354.55a1.250 1.250 0 1 0 2.500 0a1.250 1.250 0 1 0 -2.500 0zM345.20 354.55a1.250 1.250 0 1 0 2.500 0a1.250 1.250 0 1 0 -2.500 0zM349.25 354.55a1.250 1.250 0 1 0 2.500 0a1.250 1.250 0 1 0 -2.500 0zM353.30 354.55a1.250 1.250 0 1 0 2.500 0a1.250 1.250 0 1 0 -2.500 0zM357.35 354.55a1.250 1.250 0 1 0 2.500 0a1.250 1.250 0 1 0 -2.500 0zM361.40 354.55a1.250 1.250 0 1 0 2.500 0a1.250 1.250 0 1 0 -2.500 0zM365.45 354.55a1.250 1.250 0 1 0 2.500 0a1.250 1.250 0 1 0 -2.500 0zM369.50 354.55a1.250 1.250 0 1 0 2.500 0a1.250 1.250 0 1 0 -2.500 0zM373.55 354.55a1.250 1.250 0 1 0 2.500 0a1.250 1.250 0 1 0 -2.500 0zM377.60 354.55a1.250 1.250 0 1 0 2.500 0a1.250 1.250 0 1 0 -2.500 0zM381.65 354.55a1.250 1.250 0 1 0 2.500 0a1.250 1.250 0 1 0 -2.500 0zM341.15 358.60a1.250 1.250 0 1 0 2.500 0a1.250 1.250 0 1 0 -2.500 0zM345.20 358.60a1.250 1.250 0 1 0 2.500 0a1.250 1.250 0 1 0 -2.500 0zM349.25 358.60a1.250 1.250 0 1 0 2.500 0a1.250 1.250 0 1 0 -2.500 0zM353.30 358.60a1.250 1.250 0 1 0 2.500 0a1.250 1.250 0 1 0 -2.500 0zM357.35 358.60a1.250 1.250 0 1 0 2.500 0a1.250 1.250 0 1 0 -2.500 0zM361.40 358.60a1.250 1.250 0 1 0 2.500 0a1.250 1.250 0 1 0 -2.500 0zM365.45 358.60a1.250 1.250 0 1 0 2.500 0a1.250 1.250 0 1 0 -2.500 0zM369.50 358.60a1.250 1.250 0 1 0 2.500 0a1.250 1.250 0 1 0 -2.500 0zM373.55 358.60a1.250 1.250 0 1 0 2.500 0a1.250 1.250 0 1 0 -2.500 0zM377.60 358.60a1.250 1.250 0 1 0 2.500 0a1.250 1.250 0 1 0 -2.500 0zM381.65 358.60a1.250 1.250 0 1 0 2.500 0a1.250 1.250 0 1 0 -2.500 0zM341.15 362.65a1.250 1.250 0 1 0 2.500 0a1.250 1.250 0 1 0 -2.500 0zM345.20 362.65a1.250 1.250 0 1 0 2.500 0a1.250 1.250 0 1 0 -2.500 0zM349.25 362.65a1.250 1.250 0 1 0 2.500 0a1.250 1.250 0 1 0 -2.500 0zM353.30 362.65a1.250 1.250 0 1 0 2.500 0a1.250 1.250 0 1 0 -2.500 0zM357.35 362.65a1.250 1.250 0 1 0 2.500 0a1.250 1.250 0 1 0 -2.500 0zM361.40 362.65a1.250 1.250 0 1 0 2.500 0a1.250 1.250 0 1 0 -2.500 0zM365.45 362.65a1.250 1.250 0 1 0 2.500 0a1.250 1.250 0 1 0 -2.500 0zM369.50 362.65a1.250 1.250 0 1 0 2.500 0a1.250 1.250 0 1 0 -2.500 0zM373.55 362.65a1.250 1.250 0 1 0 2.500 0a1.250 1.250 0 1 0 -2.500 0zM377.60 362.65a1.250 1.250 0 1 0 2.500 0a1.250 1.250 0 1 0 -2.500 0zM381.65 362.65a1.250 1.250 0 1 0 2.500 0a1.250 1.250 0 1 0 -2.500 0z" fill="#1a1a1a"/>
<g filter="url(#bl1)">
<path d="M200 372 Q212 360 232 354 L246 346 L268 352 L276 347 Q310 352 342 368 L346 372Z" fill="#dfe9ee"/>
<path d="M276 347 Q300 351 322 360 L300 372 L270 372Z" fill="#cfdde6"/>
<path d="M234 340 L275 336 L277 350 Q268 372 258 372 L236 372Z" fill="#2b2320"/>
<path d="M226 372 L232 356 L244 348 L240 372Z" fill="#eef3f5"/>
<path d="M219 300 Q217 282 232 276 Q252 270 274 278 Q285 288 283 312 Q282 336 272 350 Q262 362 250 361 Q238 360 230 346 Q220 326 219 300Z" fill="url(#faceD)"/>
<ellipse cx="283.500" cy="316" rx="3.500" ry="8" fill="#5a3e32"/>
<path d="M216 312 Q211 278 228 268 Q248 258 270 266 Q288 276 285 310 Q281 296 277 288 Q262 280 244 284 Q230 286 224 296 Q220 304 219 316Z" fill="url(#hairD)"/>
<path d="M226 276 Q240 264 262 268 Q246 268 234 278Z" fill="#8a9aa0" opacity=".8"/><path d="M217 300 Q216 286 224 278 Q220 290 221 306Z" fill="#9aa8ae" opacity=".7"/><path d="M268 270 Q280 278 283 296 Q276 282 266 276Z" fill="#6a7a82" opacity=".8"/>
<ellipse cx="244" cy="346" rx="9" ry="6" fill="#4a3a34" opacity=".35"/>
<ellipse cx="264" cy="326" rx="7" ry="6" fill="#7a6256" opacity=".6"/>
<ellipse cx="247" cy="320" rx="4.500" ry="8" fill="#5e4a40" opacity=".7"/>
<path d="M224 298 Q236 292 246 296" stroke="#3a2c28" stroke-width="2" fill="none"/><path d="M252 295 Q262 291 272 296" stroke="#3a2c28" stroke-width="2" fill="none"/>
<path d="M233 334 Q240 328 248 330 Q256 328 263 333 Q256 336 248 336 Q240 337 233 334Z" fill="#3a2e2a"/>
<path d="M238 340 Q248 343 258 339" stroke="#3a2420" stroke-width="1.600" fill="none"/>
<ellipse cx="232" cy="311" rx="5" ry="1.800" fill="#2a2220"/><ellipse cx="259" cy="309.500" rx="5" ry="1.800" fill="#2a2220"/>
</g>
<g filter="url(#bl05)" fill="#a09a94" fill-opacity=".4" stroke="#1c1a1a" stroke-width="2.400">
<rect x="221.500" y="302" width="21" height="19" rx="8"/>
<rect x="248" y="300.500" width="22" height="19" rx="8"/>
<path d="M242.500 308 Q245.500 306 248 307.500" fill="none"/><path d="M270 306 L283 303" fill="none" stroke-width="1.800"/>
</g>
</g>
<rect x="78" y="192" width="317" height="177" fill="none" stroke="#7fe31f" stroke-width="2.200"/>
<rect x="80.0" y="354.0" width="97.0" height="14.5" fill="#2b2b2b" opacity="0.820"/><text x="84.0" y="366.3" font-family="Liberation Sans, sans-serif" font-size="13.1" fill="#fff" stroke="#fff" stroke-width="0.450" textLength="90.0" lengthAdjust="spacingAndGlyphs">Dedik Sumargo</text>
<g clip-path="url(#c2)">
<rect x="396" y="191" width="319" height="179" fill="url(#g2bg)"/>
<circle cx="420.4" cy="214.0" r="19.200" fill="#fff"/>
<circle cx="420.4" cy="214.0" r="15" fill="none" stroke="#666" stroke-width="0.500"/>
<g transform="translate(420.4 214.0)"><text font-family="Liberation Sans, sans-serif" font-weight="bold" font-size="3.300" fill="#3c3c3c" letter-spacing="0.150"><textPath href="#sealTop" startOffset="50%" text-anchor="middle">BADAN PENGAWAS TENAGA NUKLIR</textPath></text><text font-family="Liberation Sans, sans-serif" font-weight="bold" font-size="3.400" fill="#222" letter-spacing="0.700"><textPath href="#sealBot" startOffset="50%" text-anchor="middle">BAPETEN</textPath></text><circle cx="-16.300" cy="6.800" r="0.500" fill="#444"/><circle cx="16.300" cy="6.800" r="0.500" fill="#444"/></g>
<g transform="translate(420.40 213.70) scale(1.040)"><path d="M0 -9 C1.500 -9 1.800 -7.500 1.200 -6.500 L2.200 -4.500 C5 -4.500 8 -7 10 -10.500 C12.200 -6 11.500 -1 9 2.500 C7 5 4.500 5.500 3 5 L3.600 9.500 L0 11.500 L-3.600 9.500 L-3 5 C-4.500 5.500 -7 5 -9 2.500 C-11.500 -1 -12.200 -6 -10 -10.500 C-8 -7 -5 -4.500 -2.200 -4.500 L-1.200 -6.500 C-1.800 -7.500 -1.500 -9 0 -9Z" fill="#a8903a"/><path d="M9.600 -8 C10.400 -4 9.800 -1 8 1.800 M7.600 -6.200 C8.200 -3 7.600 -0.500 6.200 2 M-9.600 -8 C-10.400 -4 -9.800 -1 -8 1.800 M-7.600 -6.200 C-8.200 -3 -7.600 -0.500 -6.200 2" fill="none" stroke="#7a6420" stroke-width="0.500"/><path d="M-1.400 -8 L-2.600 -7.400 L-1.200 -7.100Z" fill="#a8903a"/><path d="M-2.400 -3.600 H2.400 V1.400 Q2.400 3.800 0 5 Q-2.400 3.800 -2.400 1.400Z" fill="#c2302a"/><path d="M-2.400 -0.200 H2.400 V1.400 Q2.400 3.800 0 5 Q-2.400 3.800 -2.400 1.400Z" fill="#f0ece4"/><rect x="-1" y="-1.600" width="2" height="2.800" fill="#1a1a1a"/><path d="M-5.600 8.600 Q0 11 5.600 8.600" fill="none" stroke="#f4f4f0" stroke-width="1.300"/><path d="M-5.600 8.600 Q0 11 5.600 8.600" fill="none" stroke="#777" stroke-width="0.300" transform="translate(0 0.800)"/></g>
<path d="M446.52 220.99 A17.90 17.90 0 0 1 461.44 196.17 L462.10 203.74 A10.30 10.30 0 0 0 453.52 218.02 Z" fill="#e8332a"/>
<path d="M465.18 196.23 A17.90 17.90 0 0 1 479.82 220.12 L472.68 217.52 A10.30 10.30 0 0 0 464.26 203.78 Z" fill="#cfba5c"/>
<path d="M477.48 224.52 A17.90 17.90 0 0 1 448.89 225.02 L454.88 220.34 A10.30 10.30 0 0 0 471.33 220.05 Z" fill="#1b5e2a"/>
<circle cx="463.0" cy="214.0" r="7.300" fill="#fff" stroke="#b0b0b8" stroke-width="0.800"/>
<g transform="translate(463.00 213.80) scale(0.460)"><path d="M0 -9 C1.500 -9 1.800 -7.500 1.200 -6.500 L2.200 -4.500 C5 -4.500 8 -7 10 -10.500 C12.200 -6 11.500 -1 9 2.500 C7 5 4.500 5.500 3 5 L3.600 9.500 L0 11.500 L-3.600 9.500 L-3 5 C-4.500 5.500 -7 5 -9 2.500 C-11.500 -1 -12.200 -6 -10 -10.500 C-8 -7 -5 -4.500 -2.200 -4.500 L-1.200 -6.500 C-1.800 -7.500 -1.500 -9 0 -9Z" fill="#a8903a"/><path d="M-2.400 -3.600 H2.400 V1.400 Q2.400 3.800 0 5 Q-2.400 3.800 -2.400 1.400Z" fill="#c2302a"/><path d="M-2.400 -0.200 H2.400 V1.400 Q2.400 3.800 0 5 Q-2.400 3.800 -2.400 1.400Z" fill="#f0ece4"/><rect x="-1" y="-1.600" width="2" height="2.800" fill="#1a1a1a"/><path d="M-5.600 8.600 Q0 11 5.600 8.600" fill="none" stroke="#f4f4f0" stroke-width="1.300"/><path d="M-5.600 8.600 Q0 11 5.600 8.600" fill="none" stroke="#777" stroke-width="0.300" transform="translate(0 0.800)"/></g>
<text x="463.0" y="230.3" text-anchor="middle" font-family="Liberation Sans, sans-serif" font-weight="bold" font-size="3.200" fill="#f0f6ea" textLength="9.500">Tangguh</text>
<text x="488.4" y="207.9" font-family="Liberation Sans, sans-serif" font-weight="bold" font-size="6.500" fill="#101c30" stroke="#101c30" stroke-width="0.250" textLength="180" lengthAdjust="spacingAndGlyphs">Pusat Pengkajian Sistem dan Teknologi Pengawasan</text>
<text x="488.4" y="216.7" font-family="Liberation Sans, sans-serif" font-weight="bold" font-size="6.500" fill="#101c30" stroke="#101c30" stroke-width="0.250" textLength="165" lengthAdjust="spacingAndGlyphs">Fasilitas Radiasi dan Zat Radioaktif (P2STPFRZR)</text>
<text x="488.4" y="225.2" font-family="Liberation Sans, sans-serif" font-size="6.600" fill="#2a3340" textLength="116" lengthAdjust="spacingAndGlyphs">Terkini, Akurat, Sistematis, Konkret</text>
<text x="401.3" y="245.3" font-family="Liberation Sans, sans-serif" font-weight="bold" font-size="6.200" textLength="37.500" lengthAdjust="spacingAndGlyphs"><tspan fill="#a83a4a" stroke="#a83a4a" stroke-width="0.250">Ber</tspan><tspan fill="#d0242e" stroke="#d0242e" stroke-width="0.300">AKHLAK</tspan></text>
<path d="M436.5 241.0 l3.400 -3.600 l-1.400 -1.400" fill="none" stroke="#3a3a3a" stroke-width="0.600"/>
<rect x="401.3" y="247.3" width="37.500" height="0.900" fill="#8a9098"/>
<rect x="401.3" y="249.3" width="28" height="0.900" fill="#a0a6ae"/>
<text x="407.8" y="266.0" font-family="Liberation Sans, sans-serif" font-weight="bold" font-style="italic" font-size="12.500" fill="#d0242e">#</text>
<text x="415.5" y="258.6" font-family="Liberation Sans, sans-serif" font-weight="bold" font-size="3.800" fill="#2a2a2a" textLength="15.500" lengthAdjust="spacingAndGlyphs">bangga</text>
<text x="415.0" y="262.3" font-family="Liberation Sans, sans-serif" font-size="3.800" fill="#c8323a" textLength="18.500" lengthAdjust="spacingAndGlyphs">melayani</text>
<text x="414.5" y="266.0" font-family="Liberation Sans, sans-serif" font-size="3.800" fill="#c8323a" textLength="15.500" lengthAdjust="spacingAndGlyphs">bangsa</text>
<rect x="412.0" y="343.0" width="4.700" height="4.700" fill="#0c1c28"/>
<rect x="428.0" y="343.0" width="4.700" height="4.700" fill="#0c1c28"/>
<rect x="404.0" y="351.0" width="4.700" height="4.700" fill="#0c1c28"/>
<rect x="412.0" y="351.0" width="4.700" height="4.700" fill="#0c1c28"/>
<rect x="420.0" y="351.0" width="4.700" height="4.700" fill="#0c1c28"/>
<rect x="428.0" y="351.0" width="4.700" height="4.700" fill="#0c1c28"/>
<rect x="436.0" y="351.0" width="4.700" height="4.700" fill="#0c1c28"/>
<rect x="692.2" y="308.0" width="3.800" height="3.800" fill="#0c1c28"/>
<rect x="686.3" y="308.0" width="3.800" height="3.800" fill="#0c1c28"/>
<rect x="698.1" y="308.0" width="3.800" height="3.800" fill="#0c1c28"/>
<rect x="692.2" y="302.1" width="3.800" height="3.800" fill="#0c1c28"/>
<rect x="692.2" y="313.9" width="3.800" height="3.800" fill="#0c1c28"/>
<path d="M688.50 334.30a1.250 1.250 0 1 0 2.500 0a1.250 1.250 0 1 0 -2.500 0zM692.55 334.30a1.250 1.250 0 1 0 2.500 0a1.250 1.250 0 1 0 -2.500 0zM696.60 334.30a1.250 1.250 0 1 0 2.500 0a1.250 1.250 0 1 0 -2.500 0zM700.65 334.30a1.250 1.250 0 1 0 2.500 0a1.250 1.250 0 1 0 -2.500 0zM688.50 338.35a1.250 1.250 0 1 0 2.500 0a1.250 1.250 0 1 0 -2.500 0zM692.55 338.35a1.250 1.250 0 1 0 2.500 0a1.250 1.250 0 1 0 -2.500 0zM696.60 338.35a1.250 1.250 0 1 0 2.500 0a1.250 1.250 0 1 0 -2.500 0zM700.65 338.35a1.250 1.250 0 1 0 2.500 0a1.250 1.250 0 1 0 -2.500 0zM688.50 342.40a1.250 1.250 0 1 0 2.500 0a1.250 1.250 0 1 0 -2.500 0zM692.55 342.40a1.250 1.250 0 1 0 2.500 0a1.250 1.250 0 1 0 -2.500 0zM696.60 342.40a1.250 1.250 0 1 0 2.500 0a1.250 1.250 0 1 0 -2.500 0zM700.65 342.40a1.250 1.250 0 1 0 2.500 0a1.250 1.250 0 1 0 -2.500 0zM688.50 346.45a1.250 1.250 0 1 0 2.500 0a1.250 1.250 0 1 0 -2.500 0zM692.55 346.45a1.250 1.250 0 1 0 2.500 0a1.250 1.250 0 1 0 -2.500 0zM696.60 346.45a1.250 1.250 0 1 0 2.500 0a1.250 1.250 0 1 0 -2.500 0zM700.65 346.45a1.250 1.250 0 1 0 2.500 0a1.250 1.250 0 1 0 -2.500 0zM660.15 350.50a1.250 1.250 0 1 0 2.500 0a1.250 1.250 0 1 0 -2.500 0zM664.20 350.50a1.250 1.250 0 1 0 2.500 0a1.250 1.250 0 1 0 -2.500 0zM668.25 350.50a1.250 1.250 0 1 0 2.500 0a1.250 1.250 0 1 0 -2.500 0zM672.30 350.50a1.250 1.250 0 1 0 2.500 0a1.250 1.250 0 1 0 -2.500 0zM676.35 350.50a1.250 1.250 0 1 0 2.500 0a1.250 1.250 0 1 0 -2.500 0zM680.40 350.50a1.250 1.250 0 1 0 2.500 0a1.250 1.250 0 1 0 -2.500 0zM684.45 350.50a1.250 1.250 0 1 0 2.500 0a1.250 1.250 0 1 0 -2.500 0zM688.50 350.50a1.250 1.250 0 1 0 2.500 0a1.250 1.250 0 1 0 -2.500 0zM692.55 350.50a1.250 1.250 0 1 0 2.500 0a1.250 1.250 0 1 0 -2.500 0zM696.60 350.50a1.250 1.250 0 1 0 2.500 0a1.250 1.250 0 1 0 -2.500 0zM700.65 350.50a1.250 1.250 0 1 0 2.500 0a1.250 1.250 0 1 0 -2.500 0zM660.15 354.55a1.250 1.250 0 1 0 2.500 0a1.250 1.250 0 1 0 -2.500 0zM664.20 354.55a1.250 1.250 0 1 0 2.500 0a1.250 1.250 0 1 0 -2.500 0zM668.25 354.55a1.250 1.250 0 1 0 2.500 0a1.250 1.250 0 1 0 -2.500 0zM672.30 354.55a1.250 1.250 0 1 0 2.500 0a1.250 1.250 0 1 0 -2.500 0zM676.35 354.55a1.250 1.250 0 1 0 2.500 0a1.250 1.250 0 1 0 -2.500 0zM680.40 354.55a1.250 1.250 0 1 0 2.500 0a1.250 1.250 0 1 0 -2.500 0zM684.45 354.55a1.250 1.250 0 1 0 2.500 0a1.250 1.250 0 1 0 -2.500 0zM688.50 354.55a1.250 1.250 0 1 0 2.500 0a1.250 1.250 0 1 0 -2.500 0zM692.55 354.55a1.250 1.250 0 1 0 2.500 0a1.250 1.250 0 1 0 -2.500 0zM696.60 354.55a1.250 1.250 0 1 0 2.500 0a1.250 1.250 0 1 0 -2.500 0zM700.65 354.55a1.250 1.250 0 1 0 2.500 0a1.250 1.250 0 1 0 -2.500 0zM660.15 358.60a1.250 1.250 0 1 0 2.500 0a1.250 1.250 0 1 0 -2.500 0zM664.20 358.60a1.250 1.250 0 1 0 2.500 0a1.250 1.250 0 1 0 -2.500 0zM668.25 358.60a1.250 1.250 0 1 0 2.500 0a1.250 1.250 0 1 0 -2.500 0zM672.30 358.60a1.250 1.250 0 1 0 2.500 0a1.250 1.250 0 1 0 -2.500 0zM676.35 358.60a1.250 1.250 0 1 0 2.500 0a1.250 1.250 0 1 0 -2.500 0zM680.40 358.60a1.250 1.250 0 1 0 2.500 0a1.250 1.250 0 1 0 -2.500 0zM684.45 358.60a1.250 1.250 0 1 0 2.500 0a1.250 1.250 0 1 0 -2.500 0zM688.50 358.60a1.250 1.250 0 1 0 2.500 0a1.250 1.250 0 1 0 -2.500 0zM692.55 358.60a1.250 1.250 0 1 0 2.500 0a1.250 1.250 0 1 0 -2.500 0zM696.60 358.60a1.250 1.250 0 1 0 2.500 0a1.250 1.250 0 1 0 -2.500 0zM700.65 358.60a1.250 1.250 0 1 0 2.500 0a1.250 1.250 0 1 0 -2.500 0zM660.15 362.65a1.250 1.250 0 1 0 2.500 0a1.250 1.250 0 1 0 -2.500 0zM664.20 362.65a1.250 1.250 0 1 0 2.500 0a1.250 1.250 0 1 0 -2.500 0zM668.25 362.65a1.250 1.250 0 1 0 2.500 0a1.250 1.250 0 1 0 -2.500 0zM672.30 362.65a1.250 1.250 0 1 0 2.500 0a1.250 1.250 0 1 0 -2.500 0zM676.35 362.65a1.250 1.250 0 1 0 2.500 0a1.250 1.250 0 1 0 -2.500 0zM680.40 362.65a1.250 1.250 0 1 0 2.500 0a1.250 1.250 0 1 0 -2.500 0zM684.45 362.65a1.250 1.250 0 1 0 2.500 0a1.250 1.250 0 1 0 -2.500 0zM688.50 362.65a1.250 1.250 0 1 0 2.500 0a1.250 1.250 0 1 0 -2.500 0zM692.55 362.65a1.250 1.250 0 1 0 2.500 0a1.250 1.250 0 1 0 -2.500 0zM696.60 362.65a1.250 1.250 0 1 0 2.500 0a1.250 1.250 0 1 0 -2.500 0zM700.65 362.65a1.250 1.250 0 1 0 2.500 0a1.250 1.250 0 1 0 -2.500 0z" fill="#1a1a1a"/>
<g filter="url(#bl1)">
<path d="M462 372 Q474 338 502 326 L538 312 L590 310 Q640 320 660 342 Q670 356 674 372Z" fill="#edf1ef"/>
<ellipse cx="516.7" cy="326.7" rx="3.2" ry="0.9" fill="#88a8a0" transform="rotate(5 516.7 326.7)"/><ellipse cx="549.5" cy="364.2" rx="2.6" ry="1.2" fill="#9ab89a" transform="rotate(70 549.5 364.2)"/><ellipse cx="624.4" cy="360.0" rx="2.5" ry="1.5" fill="#d8a27a" transform="rotate(164 624.4 360.0)"/><ellipse cx="629.7" cy="358.8" rx="2.4" ry="1.0" fill="#b8cdb8" transform="rotate(95 629.7 358.8)"/><ellipse cx="487.2" cy="349.9" rx="3.0" ry="1.0" fill="#a8b8b0" transform="rotate(63 487.2 349.9)"/><ellipse cx="655.0" cy="361.8" rx="4.1" ry="0.8" fill="#c9d8c8" transform="rotate(74 655.0 361.8)"/><ellipse cx="583.3" cy="362.6" rx="2.5" ry="1.1" fill="#c9d8c8" transform="rotate(73 583.3 362.6)"/><ellipse cx="530.4" cy="359.4" rx="2.2" ry="1.2" fill="#9ab89a" transform="rotate(71 530.4 359.4)"/><ellipse cx="572.7" cy="351.8" rx="2.9" ry="1.6" fill="#a8b8b0" transform="rotate(50 572.7 351.8)"/><ellipse cx="483.2" cy="364.0" rx="3.6" ry="1.0" fill="#a8b8b0" transform="rotate(91 483.2 364.0)"/><ellipse cx="595.6" cy="331.1" rx="2.3" ry="0.8" fill="#d8a27a" transform="rotate(58 595.6 331.1)"/><ellipse cx="524.9" cy="348.8" rx="2.3" ry="1.5" fill="#b8cdb8" transform="rotate(74 524.9 348.8)"/><ellipse cx="608.1" cy="363.2" rx="3.8" ry="1.6" fill="#d8a27a" transform="rotate(4 608.1 363.2)"/><ellipse cx="500.3" cy="352.0" rx="3.7" ry="0.9" fill="#c9d8c8" transform="rotate(158 500.3 352.0)"/><ellipse cx="507.9" cy="342.4" rx="2.6" ry="1.3" fill="#b8cdb8" transform="rotate(40 507.9 342.4)"/><ellipse cx="625.2" cy="338.7" rx="3.4" ry="1.2" fill="#d8a27a" transform="rotate(53 625.2 338.7)"/><ellipse cx="503.4" cy="353.1" rx="3.5" ry="1.2" fill="#b8cdb8" transform="rotate(149 503.4 353.1)"/><ellipse cx="519.3" cy="367.9" rx="4.1" ry="1.0" fill="#9ab89a" transform="rotate(104 519.3 367.9)"/><ellipse cx="599.0" cy="331.2" rx="2.6" ry="1.1" fill="#b8cdb8" transform="rotate(9 599.0 331.2)"/><ellipse cx="513.4" cy="342.4" rx="4.2" ry="1.5" fill="#a8b8b0" transform="rotate(127 513.4 342.4)"/><ellipse cx="507.2" cy="323.7" rx="2.6" ry="1.0" fill="#d8a27a" transform="rotate(59 507.2 323.7)"/><ellipse cx="534.4" cy="363.0" rx="3.4" ry="1.6" fill="#d8a27a" transform="rotate(103 534.4 363.0)"/><ellipse cx="642.4" cy="355.0" rx="3.2" ry="0.9" fill="#9ab89a" transform="rotate(53 642.4 355.0)"/><ellipse cx="654.1" cy="348.3" rx="2.8" ry="1.3" fill="#b8cdb8" transform="rotate(164 654.1 348.3)"/><ellipse cx="512.6" cy="358.9" rx="2.8" ry="1.1" fill="#d8a27a" transform="rotate(127 512.6 358.9)"/><ellipse cx="484.7" cy="366.7" rx="3.7" ry="0.8" fill="#a8b8b0" transform="rotate(158 484.7 366.7)"/><ellipse cx="495.3" cy="366.6" rx="4.1" ry="1.5" fill="#a8b8b0" transform="rotate(176 495.3 366.6)"/><ellipse cx="595.8" cy="348.2" rx="3.0" ry="1.1" fill="#a8b8b0" transform="rotate(0 595.8 348.2)"/><ellipse cx="511.8" cy="329.2" rx="4.2" ry="0.9" fill="#c9d8c8" transform="rotate(97 511.8 329.2)"/><ellipse cx="643.8" cy="347.3" rx="2.4" ry="1.3" fill="#b8cdb8" transform="rotate(143 643.8 347.3)"/><ellipse cx="623.2" cy="343.7" rx="3.1" ry="0.9" fill="#c9d8c8" transform="rotate(178 623.2 343.7)"/><ellipse cx="641.2" cy="350.0" rx="2.1" ry="0.9" fill="#b8cdb8" transform="rotate(133 641.2 350.0)"/>
<path d="M521 262 Q519 226 546 213 Q564 207 582 215 Q605 228 602 268 Q600 292 594 306 L591 324 Q586 338 568 344 Q548 340 540 328 L536 308 Q523 290 521 262Z" fill="url(#hij)"/>
<path d="M521 262 Q520 236 536 222 Q528 240 530 262Z" fill="#6a5a34" opacity=".7"/><path d="M602 262 Q603 236 588 220 Q596 240 596 262Z" fill="#6a5a34" opacity=".7"/>
<path d="M537 314 Q562 334 592 312 L590 326 Q586 338 568 344 Q548 340 540 328Z" fill="#b89c34"/>
<path d="M537 306 Q540 316 548 320 L544 326 Q537 318 536 310Z" fill="#d88a4a" opacity=".8"/>
<path d="M529 262 Q530 238 548 232 Q566 228 584 234 Q597 244 596 268 Q594 296 584 310 Q572 322 560 320 Q544 316 536 296 Q529 278 529 262Z" fill="url(#faceE)"/>
<path d="M545 212 Q566 206 586 216 Q598 226 600 244 Q586 228 566 229 Q544 230 530 246 Q528 222 545 212Z" fill="#cdb548"/>
<path d="M549 297 Q561 292 575 297 Q562 303 549 297Z" fill="#8c4c54"/>
<path d="M556 283 Q562 287 568 283" stroke="#b88a72" stroke-width="1.400" fill="none"/>
<path d="M533 250 Q545 246 556 250" stroke="#5a4640" stroke-width="1.400" fill="none"/><path d="M568 250 Q580 246 592 250" stroke="#5a4640" stroke-width="1.400" fill="none"/>
<path d="M518 258 Q518 214 562 210 Q608 212 609 258" fill="none" stroke="#141414" stroke-width="3.600"/>
<rect x="512" y="246" width="18" height="46" rx="8" fill="#161616"/>
<rect x="595" y="246" width="19" height="47" rx="8" fill="#161616"/>
<rect x="524" y="252" width="4" height="34" rx="2" fill="#4a2422"/>
<rect x="597" y="252" width="4" height="34" rx="2" fill="#4a2422"/>
<path d="M606 292 Q604 312 600 324" fill="none" stroke="#222" stroke-width="1.600"/>
<circle cx="599.500" cy="328.500" r="6.500" fill="#111"/>
<path d="M592 330 Q590 352 578 370" fill="none" stroke="#444" stroke-width="1"/>
</g>
<g filter="url(#bl05)"><rect x="529" y="253" width="30" height="20" rx="3" fill="#d9d9ee" fill-opacity=".4" stroke="#5a5a66" stroke-width="1.200"/><rect x="565" y="253" width="30" height="20" rx="3" fill="#d9d9ee" fill-opacity=".4" stroke="#5a5a66" stroke-width="1.200"/><path d="M559 259 H565" stroke="#5a5a66" stroke-width="1.300"/><ellipse cx="545" cy="264" rx="8" ry="3.500" fill="#6464c8" opacity=".45"/><ellipse cx="578" cy="264" rx="8" ry="3.500" fill="#6464c8" opacity=".45"/><ellipse cx="545" cy="265.500" rx="5" ry="1.500" fill="#2a2230"/><ellipse cx="578" cy="265.500" rx="5" ry="1.500" fill="#2a2230"/></g>
</g>
<rect x="396.0" y="354.0" width="176.0" height="14.5" fill="#2b2b2b" opacity="0.820"/><text x="400.0" y="366.3" font-family="Liberation Sans, sans-serif" font-size="13.1" fill="#fff" stroke="#fff" stroke-width="0.450" textLength="169.0" lengthAdjust="spacingAndGlyphs">P2STPFRZR_Endang Kunarsih</text>
<g clip-path="url(#c3)">
<rect x="715" y="191" width="319" height="179" fill="#e4e4e4"/>
<g filter="url(#bl05)">
<path d="M806 372 Q808 340 822 326 Q836 314 852 310 L868 330 L886 308 Q908 314 922 326 Q938 342 942 372Z" fill="url(#jackA)"/>
<path d="M849 300 L890 300 L892 312 L884 322 L876 372 L860 372 L854 322 L848 312Z" fill="#b9c1cd"/>
<path d="M848 304 L868 318 L860 328 L846 312Z" fill="#c9d0da"/><path d="M890 304 L870 318 L878 328 L893 312Z" fill="#c9d0da"/>
<path d="M864 318 L873 318 L875 326 L872.500 372 L865.500 372 L863 326Z" fill="#2c4ea6"/>
<rect x="856" y="290" width="26" height="16" fill="#d8a080"/>
<ellipse cx="838" cy="276" rx="5" ry="8" fill="#e0a888"/><ellipse cx="898" cy="276" rx="5" ry="8" fill="#e0a888"/>
<path d="M840 262 Q840 240 868 240 Q896 240 896 262 L895 280 Q892 300 868 302 Q844 300 841 280Z" fill="url(#faceA)"/>
<path d="M838 270 Q832 244 840 236 Q842 226 852 224 Q862 216 876 220 Q892 222 896 236 Q904 246 898 270 Q896 254 890 248 Q868 240 846 248 Q840 256 838 270Z" fill="#3a2f3a"/>
<path d="M850 228 Q862 220 874 224 Q862 226 854 234Z" fill="#54465a"/>
<path d="M849 264 Q856 259 865 263" stroke="#2e2428" stroke-width="3" fill="none" stroke-linecap="round"/><path d="M872 263 Q880 259 887 264" stroke="#2e2428" stroke-width="3" fill="none" stroke-linecap="round"/>
<ellipse cx="857" cy="272.500" rx="4.600" ry="3.800" fill="#fff"/><ellipse cx="879" cy="272.500" rx="4.600" ry="3.800" fill="#fff"/><circle cx="858" cy="272.500" r="2.800" fill="#111"/><circle cx="878" cy="272.500" r="2.800" fill="#111"/>
<ellipse cx="868" cy="282" rx="4" ry="3.600" fill="#e89c84"/>
<path d="M861 291 Q868 293 875 291" stroke="#b86a5a" stroke-width="1.600" fill="none" stroke-linecap="round"/>
</g></g>
<rect x="715.0" y="354.0" width="111.0" height="14.5" fill="#2b2b2b" opacity="0.820"/><text x="719.0" y="366.3" font-family="Liberation Sans, sans-serif" font-size="13.1" fill="#fff" stroke="#fff" stroke-width="0.450" textLength="104.0" lengthAdjust="spacingAndGlyphs">Putu Arizona Gani</text>
<g clip-path="url(#c4)">
<rect x="77" y="370" width="319" height="179" fill="#2c2c2c"/>
<g clip-path="url(#c4i)">
<rect x="77" y="376" width="319" height="173" fill="url(#t4bg)"/>
<rect x="232" y="376" width="40" height="40" fill="#7a6658" filter="url(#bl3)"/>
<g filter="url(#bl05)">
<circle cx="191.0" cy="468.0" r="85" fill="#f4f4f0"/>
<circle cx="191.0" cy="468.0" r="81" fill="#0c0c0a"/>
<circle cx="191.0" cy="468.0" r="76" fill="#c9b93c"/>
<path d="M121.04 470.44 A70.00 70.00 0 0 1 159.22 405.63 L180.79 447.95 A22.50 22.50 0 0 0 168.51 468.79 Z" fill="#0a0a08"/>
<path d="M223.86 406.19 A70.00 70.00 0 0 1 260.90 471.66 L213.47 469.18 A22.50 22.50 0 0 0 201.56 448.13 Z" fill="#0a0a08"/>
<path d="M228.09 527.36 A70.00 70.00 0 0 1 152.88 526.71 L178.75 486.87 A22.50 22.50 0 0 0 202.92 487.08 Z" fill="#0a0a08"/>
<circle cx="191.0" cy="468.0" r="14" fill="#0a0a08"/>
</g>
<g filter="url(#bl2)">
<path d="M88 522 L200 526 L340 540 L396 540 L396 552 L77 552 L77 524Z" fill="#6a6a6a"/>
<path d="M92 524 Q140 528 168 548 L92 548Z" fill="#b0b0ae"/>
<path d="M170 540 Q240 534 330 542 L330 549 L176 549Z" fill="#c4c4c2"/>
<path d="M120 530 Q150 536 176 548 L140 548Z" fill="#4a4a4a"/>
<path d="M226 486 Q250 480 300 490 L340 520 L330 548 L222 548 Z" fill="#191616"/>
<rect x="370" y="452" width="22" height="76" fill="#a8a090" filter="url(#bl3)"/>
<path d="M290 500 Q330 478 368 484 L392 500 L392 549 L300 549 Q288 524 290 500Z" fill="#3e1618"/>
<path d="M326 504 Q356 492 390 506 L390 530 L336 530Z" fill="#5a2226"/>
<path d="M304 549 Q310 526 338 517 Q368 512 390 524 L390 549Z" fill="#bab2aa"/>
<path d="M304 549 Q310 530 332 520 Q322 534 322 549Z" fill="#7a726c"/>
<path d="M280 500 Q296 508 312 502 L304 520 Q290 520 280 500Z" fill="#d8d4d0"/>
<path d="M262 392 Q290 370 340 376 Q392 384 392 440 Q390 478 360 486 Q344 470 330 440 Q310 410 262 392Z" fill="url(#babyH)"/>
<path d="M272 386 Q300 374 334 380 Q304 386 288 400Z" fill="#d4c2aa"/>
<path d="M300 392 Q326 392 346 410 Q322 400 304 400Z" fill="#b4a28c" opacity=".8"/><path d="M318 410 Q342 420 352 446 Q336 426 316 418Z" fill="#a4927e" opacity=".7"/>
<path d="M350 400 Q380 410 388 450 Q384 476 364 484 Q372 440 350 400Z" fill="#3a2a20"/>
<path d="M255 396 Q250 410 248 430 L247 442 L243 455 L246 462 L247 472 L249 482 L254 491 Q272 502 296 500 Q326 496 336 476 Q344 450 330 420 Q312 388 280 386 Q264 388 255 396Z" fill="url(#babyF)"/>
<path d="M262 390 Q280 376 340 376 Q392 384 392 440 Q390 478 360 486 Q348 474 338 462 L329 460 Q322 440 309 422 Q296 406 265 388Z" fill="url(#babyH)"/>
<path d="M268 388 Q296 378 330 382 Q304 388 292 402Z" fill="#d4c2aa" opacity=".9"/><path d="M298 398 Q324 398 344 416 Q322 406 306 408Z" fill="#b4a28c" opacity=".8"/><path d="M318 420 Q340 430 348 454 Q334 434 318 428Z" fill="#a4927e" opacity=".7"/>
<path d="M352 400 Q382 412 388 452 Q384 476 366 484 Q374 440 352 400Z" fill="#342822"/>
<ellipse cx="327" cy="478" rx="14" ry="18" fill="#c2a8a0"/><ellipse cx="325" cy="480" rx="7" ry="11" fill="#8a6a64"/>
<ellipse cx="304" cy="478" rx="24" ry="14" fill="#988a80" opacity=".5" filter="url(#bl3)"/>
<path d="M262 432 Q270 428 280 432" stroke="#6a5a50" stroke-width="2" fill="none"/>
<ellipse cx="271" cy="443" rx="5" ry="3.500" fill="#1a1614"/>
<path d="M247 472 Q252 475 258 473" stroke="#6a4a46" stroke-width="2.200" fill="none"/>
<path d="M236 447 L247 452 Q250 468 241 482 Q235 498 234 516 L236 530 Q216 538 190 530 Q176 520 178 504 Q182 488 196 476 Q214 458 236 447Z" fill="url(#armG)"/>
<path d="M186 528 Q214 538 240 530 Q270 532 300 540 L300 549 L186 549Z" fill="#7e7874"/>
<path d="M180 510 Q186 528 204 534 Q190 534 182 526Z" fill="#6a625e" opacity=".7"/>
<ellipse cx="243" cy="472" rx="7" ry="20" fill="#dcd6d2"/>
<rect x="232" y="424" width="16" height="26" rx="4" fill="#c4c4cc" transform="rotate(14 240 437)"/><rect x="236" y="427" width="11" height="19" rx="2" fill="#2e2e6a" transform="rotate(14 240 437)"/>
</g>
<rect x="79" y="378" width="310" height="170" fill="none" stroke="#000" stroke-opacity=".4" stroke-width="8" filter="url(#bl3)"/>
</g></g>
<rect x="77.0" y="533.0" width="48.0" height="15.5" fill="#2b2b2b" opacity="0.820"/><text x="81.0" y="546.3" font-family="Liberation Sans, sans-serif" font-size="13.1" fill="#fff" stroke="#fff" stroke-width="0.450" textLength="40.0" lengthAdjust="spacingAndGlyphs">iwant f</text>
<g clip-path="url(#c5)">
<rect x="396" y="370" width="319" height="179" fill="#fdfdfd"/>
<circle cx="420.4" cy="393.0" r="19.200" fill="#fff"/>
<circle cx="420.4" cy="393.0" r="15" fill="none" stroke="#666" stroke-width="0.500"/>
<g transform="translate(420.4 393.0)"><text font-family="Liberation Sans, sans-serif" font-weight="bold" font-size="3.300" fill="#3c3c3c" letter-spacing="0.150"><textPath href="#sealTop" startOffset="50%" text-anchor="middle">BADAN PENGAWAS TENAGA NUKLIR</textPath></text><text font-family="Liberation Sans, sans-serif" font-weight="bold" font-size="3.400" fill="#222" letter-spacing="0.700"><textPath href="#sealBot" startOffset="50%" text-anchor="middle">BAPETEN</textPath></text><circle cx="-16.300" cy="6.800" r="0.500" fill="#444"/><circle cx="16.300" cy="6.800" r="0.500" fill="#444"/></g>
<g transform="translate(420.40 392.70) scale(1.040)"><path d="M0 -9 C1.500 -9 1.800 -7.500 1.200 -6.500 L2.200 -4.500 C5 -4.500 8 -7 10 -10.500 C12.200 -6 11.500 -1 9 2.500 C7 5 4.500 5.500 3 5 L3.600 9.500 L0 11.500 L-3.600 9.500 L-3 5 C-4.500 5.500 -7 5 -9 2.500 C-11.500 -1 -12.200 -6 -10 -10.500 C-8 -7 -5 -4.500 -2.200 -4.500 L-1.200 -6.500 C-1.800 -7.500 -1.500 -9 0 -9Z" fill="#a8903a"/><path d="M9.600 -8 C10.400 -4 9.800 -1 8 1.800 M7.600 -6.200 C8.200 -3 7.600 -0.500 6.200 2 M-9.600 -8 C-10.400 -4 -9.800 -1 -8 1.800 M-7.600 -6.200 C-8.200 -3 -7.600 -0.500 -6.200 2" fill="none" stroke="#7a6420" stroke-width="0.500"/><path d="M-1.400 -8 L-2.600 -7.400 L-1.200 -7.100Z" fill="#a8903a"/><path d="M-2.400 -3.600 H2.400 V1.400 Q2.400 3.800 0 5 Q-2.400 3.800 -2.400 1.400Z" fill="#c2302a"/><path d="M-2.400 -0.200 H2.400 V1.400 Q2.400 3.800 0 5 Q-2.400 3.800 -2.400 1.400Z" fill="#f0ece4"/><rect x="-1" y="-1.600" width="2" height="2.800" fill="#1a1a1a"/><path d="M-5.600 8.600 Q0 11 5.600 8.600" fill="none" stroke="#f4f4f0" stroke-width="1.300"/><path d="M-5.600 8.600 Q0 11 5.600 8.600" fill="none" stroke="#777" stroke-width="0.300" transform="translate(0 0.800)"/></g>
<path d="M446.52 399.99 A17.90 17.90 0 0 1 461.44 375.17 L462.10 382.74 A10.30 10.30 0 0 0 453.52 397.02 Z" fill="#e8332a"/>
<path d="M465.18 375.23 A17.90 17.90 0 0 1 479.82 399.12 L472.68 396.52 A10.30 10.30 0 0 0 464.26 382.78 Z" fill="#cfba5c"/>
<path d="M477.48 403.52 A17.90 17.90 0 0 1 448.89 404.02 L454.88 399.34 A10.30 10.30 0 0 0 471.33 399.05 Z" fill="#1b5e2a"/>
<circle cx="463.0" cy="393.0" r="7.300" fill="#fff" stroke="#b0b0b8" stroke-width="0.800"/>
<g transform="translate(463.00 392.80) scale(0.460)"><path d="M0 -9 C1.500 -9 1.800 -7.500 1.200 -6.500 L2.200 -4.500 C5 -4.500 8 -7 10 -10.500 C12.200 -6 11.500 -1 9 2.500 C7 5 4.500 5.500 3 5 L3.600 9.500 L0 11.500 L-3.600 9.500 L-3 5 C-4.500 5.500 -7 5 -9 2.500 C-11.500 -1 -12.200 -6 -10 -10.500 C-8 -7 -5 -4.500 -2.200 -4.500 L-1.200 -6.500 C-1.800 -7.500 -1.500 -9 0 -9Z" fill="#a8903a"/><path d="M-2.400 -3.600 H2.400 V1.400 Q2.400 3.800 0 5 Q-2.400 3.800 -2.400 1.400Z" fill="#c2302a"/><path d="M-2.400 -0.200 H2.400 V1.400 Q2.400 3.800 0 5 Q-2.400 3.800 -2.400 1.400Z" fill="#f0ece4"/><rect x="-1" y="-1.600" width="2" height="2.800" fill="#1a1a1a"/><path d="M-5.600 8.600 Q0 11 5.600 8.600" fill="none" stroke="#f4f4f0" stroke-width="1.300"/><path d="M-5.600 8.600 Q0 11 5.600 8.600" fill="none" stroke="#777" stroke-width="0.300" transform="translate(0 0.800)"/></g>
<text x="463.0" y="409.3" text-anchor="middle" font-family="Liberation Sans, sans-serif" font-weight="bold" font-size="3.200" fill="#f0f6ea" textLength="9.500">Tangguh</text>
<text x="488.4" y="386.9" font-family="Liberation Sans, sans-serif" font-weight="bold" font-size="6.500" fill="#101c30" stroke="#101c30" stroke-width="0.250" textLength="180" lengthAdjust="spacingAndGlyphs">Pusat Pengkajian Sistem dan Teknologi Pengawasan</text>
<text x="488.4" y="395.7" font-family="Liberation Sans, sans-serif" font-weight="bold" font-size="6.500" fill="#101c30" stroke="#101c30" stroke-width="0.250" textLength="165" lengthAdjust="spacingAndGlyphs">Fasilitas Radiasi dan Zat Radioaktif (P2STPFRZR)</text>
<text x="488.4" y="404.2" font-family="Liberation Sans, sans-serif" font-size="6.600" fill="#2a3340" textLength="116" lengthAdjust="spacingAndGlyphs">Terkini, Akurat, Sistematis, Konkret</text>
<text x="401.3" y="424.3" font-family="Liberation Sans, sans-serif" font-weight="bold" font-size="6.200" textLength="37.500" lengthAdjust="spacingAndGlyphs"><tspan fill="#a83a4a" stroke="#a83a4a" stroke-width="0.250">Ber</tspan><tspan fill="#d0242e" stroke="#d0242e" stroke-width="0.300">AKHLAK</tspan></text>
<path d="M436.5 420.0 l3.400 -3.600 l-1.400 -1.400" fill="none" stroke="#3a3a3a" stroke-width="0.600"/>
<rect x="401.3" y="426.3" width="37.500" height="0.900" fill="#8a9098"/>
<rect x="401.3" y="428.3" width="28" height="0.900" fill="#a0a6ae"/>
<text x="407.8" y="445.0" font-family="Liberation Sans, sans-serif" font-weight="bold" font-style="italic" font-size="12.500" fill="#d0242e">#</text>
<text x="415.5" y="437.6" font-family="Liberation Sans, sans-serif" font-weight="bold" font-size="3.800" fill="#2a2a2a" textLength="15.500" lengthAdjust="spacingAndGlyphs">bangga</text>
<text x="415.0" y="441.3" font-family="Liberation Sans, sans-serif" font-size="3.800" fill="#c8323a" textLength="18.500" lengthAdjust="spacingAndGlyphs">melayani</text>
<text x="414.5" y="445.0" font-family="Liberation Sans, sans-serif" font-size="3.800" fill="#c8323a" textLength="15.500" lengthAdjust="spacingAndGlyphs">bangsa</text>
<rect x="412.0" y="522.0" width="4.700" height="4.700" fill="#0c1c28"/>
<rect x="428.0" y="522.0" width="4.700" height="4.700" fill="#0c1c28"/>
<rect x="404.0" y="530.0" width="4.700" height="4.700" fill="#0c1c28"/>
<rect x="412.0" y="530.0" width="4.700" height="4.700" fill="#0c1c28"/>
<rect x="420.0" y="530.0" width="4.700" height="4.700" fill="#0c1c28"/>
<rect x="428.0" y="530.0" width="4.700" height="4.700" fill="#0c1c28"/>
<rect x="436.0" y="530.0" width="4.700" height="4.700" fill="#0c1c28"/>
<rect x="692.2" y="487.0" width="3.800" height="3.800" fill="#0c1c28"/>
<rect x="686.3" y="487.0" width="3.800" height="3.800" fill="#0c1c28"/>
<rect x="698.1" y="487.0" width="3.800" height="3.800" fill="#0c1c28"/>
<rect x="692.2" y="481.1" width="3.800" height="3.800" fill="#0c1c28"/>
<rect x="692.2" y="492.9" width="3.800" height="3.800" fill="#0c1c28"/>
<path d="M688.50 513.30a1.250 1.250 0 1 0 2.500 0a1.250 1.250 0 1 0 -2.500 0zM692.55 513.30a1.250 1.250 0 1 0 2.500 0a1.250 1.250 0 1 0 -2.500 0zM696.60 513.30a1.250 1.250 0 1 0 2.500 0a1.250 1.250 0 1 0 -2.500 0zM700.65 513.30a1.250 1.250 0 1 0 2.500 0a1.250 1.250 0 1 0 -2.500 0zM688.50 517.35a1.250 1.250 0 1 0 2.500 0a1.250 1.250 0 1 0 -2.500 0zM692.55 517.35a1.250 1.250 0 1 0 2.500 0a1.250 1.250 0 1 0 -2.500 0zM696.60 517.35a1.250 1.250 0 1 0 2.500 0a1.250 1.250 0 1 0 -2.500 0zM700.65 517.35a1.250 1.250 0 1 0 2.500 0a1.250 1.250 0 1 0 -2.500 0zM688.50 521.40a1.250 1.250 0 1 0 2.500 0a1.250 1.250 0 1 0 -2.500 0zM692.55 521.40a1.250 1.250 0 1 0 2.500 0a1.250 1.250 0 1 0 -2.500 0zM696.60 521.40a1.250 1.250 0 1 0 2.500 0a1.250 1.250 0 1 0 -2.500 0zM700.65 521.40a1.250 1.250 0 1 0 2.500 0a1.250 1.250 0 1 0 -2.500 0zM688.50 525.45a1.250 1.250 0 1 0 2.500 0a1.250 1.250 0 1 0 -2.500 0zM692.55 525.45a1.250 1.250 0 1 0 2.500 0a1.250 1.250 0 1 0 -2.500 0zM696.60 525.45a1.250 1.250 0 1 0 2.500 0a1.250 1.250 0 1 0 -2.500 0zM700.65 525.45a1.250 1.250 0 1 0 2.500 0a1.250 1.250 0 1 0 -2.500 0zM660.15 529.50a1.250 1.250 0 1 0 2.500 0a1.250 1.250 0 1 0 -2.500 0zM664.20 529.50a1.250 1.250 0 1 0 2.500 0a1.250 1.250 0 1 0 -2.500 0zM668.25 529.50a1.250 1.250 0 1 0 2.500 0a1.250 1.250 0 1 0 -2.500 0zM672.30 529.50a1.250 1.250 0 1 0 2.500 0a1.250 1.250 0 1 0 -2.500 0zM676.35 529.50a1.250 1.250 0 1 0 2.500 0a1.250 1.250 0 1 0 -2.500 0zM680.40 529.50a1.250 1.250 0 1 0 2.500 0a1.250 1.250 0 1 0 -2.500 0zM684.45 529.50a1.250 1.250 0 1 0 2.500 0a1.250 1.250 0 1 0 -2.500 0zM688.50 529.50a1.250 1.250 0 1 0 2.500 0a1.250 1.250 0 1 0 -2.500 0zM692.55 529.50a1.250 1.250 0 1 0 2.500 0a1.250 1.250 0 1 0 -2.500 0zM696.60 529.50a1.250 1.250 0 1 0 2.500 0a1.250 1.250 0 1 0 -2.500 0zM700.65 529.50a1.250 1.250 0 1 0 2.500 0a1.250 1.250 0 1 0 -2.500 0zM660.15 533.55a1.250 1.250 0 1 0 2.500 0a1.250 1.250 0 1 0 -2.500 0zM664.20 533.55a1.250 1.250 0 1 0 2.500 0a1.250 1.250 0 1 0 -2.500 0zM668.25 533.55a1.250 1.250 0 1 0 2.500 0a1.250 1.250 0 1 0 -2.500 0zM672.30 533.55a1.250 1.250 0 1 0 2.500 0a1.250 1.250 0 1 0 -2.500 0zM676.35 533.55a1.250 1.250 0 1 0 2.500 0a1.250 1.250 0 1 0 -2.500 0zM680.40 533.55a1.250 1.250 0 1 0 2.500 0a1.250 1.250 0 1 0 -2.500 0zM684.45 533.55a1.250 1.250 0 1 0 2.500 0a1.250 1.250 0 1 0 -2.500 0zM688.50 533.55a1.250 1.250 0 1 0 2.500 0a1.250 1.250 0 1 0 -2.500 0zM692.55 533.55a1.250 1.250 0 1 0 2.500 0a1.250 1.250 0 1 0 -2.500 0zM696.60 533.55a1.250 1.250 0 1 0 2.500 0a1.250 1.250 0 1 0 -2.500 0zM700.65 533.55a1.250 1.250 0 1 0 2.500 0a1.250 1.250 0 1 0 -2.500 0zM660.15 537.60a1.250 1.250 0 1 0 2.500 0a1.250 1.250 0 1 0 -2.500 0zM664.20 537.60a1.250 1.250 0 1 0 2.500 0a1.250 1.250 0 1 0 -2.500 0zM668.25 537.60a1.250 1.250 0 1 0 2.500 0a1.250 1.250 0 1 0 -2.500 0zM672.30 537.60a1.250 1.250 0 1 0 2.500 0a1.250 1.250 0 1 0 -2.500 0zM676.35 537.60a1.250 1.250 0 1 0 2.500 0a1.250 1.250 0 1 0 -2.500 0zM680.40 537.60a1.250 1.250 0 1 0 2.500 0a1.250 1.250 0 1 0 -2.500 0zM684.45 537.60a1.250 1.250 0 1 0 2.500 0a1.250 1.250 0 1 0 -2.500 0zM688.50 537.60a1.250 1.250 0 1 0 2.500 0a1.250 1.250 0 1 0 -2.500 0zM692.55 537.60a1.250 1.250 0 1 0 2.500 0a1.250 1.250 0 1 0 -2.500 0zM696.60 537.60a1.250 1.250 0 1 0 2.500 0a1.250 1.250 0 1 0 -2.500 0zM700.65 537.60a1.250 1.250 0 1 0 2.500 0a1.250 1.250 0 1 0 -2.500 0zM660.15 541.65a1.250 1.250 0 1 0 2.500 0a1.250 1.250 0 1 0 -2.500 0zM664.20 541.65a1.250 1.250 0 1 0 2.500 0a1.250 1.250 0 1 0 -2.500 0zM668.25 541.65a1.250 1.250 0 1 0 2.500 0a1.250 1.250 0 1 0 -2.500 0zM672.30 541.65a1.250 1.250 0 1 0 2.500 0a1.250 1.250 0 1 0 -2.500 0zM676.35 541.65a1.250 1.250 0 1 0 2.500 0a1.250 1.250 0 1 0 -2.500 0zM680.40 541.65a1.250 1.250 0 1 0 2.500 0a1.250 1.250 0 1 0 -2.500 0zM684.45 541.65a1.250 1.250 0 1 0 2.500 0a1.250 1.250 0 1 0 -2.500 0zM688.50 541.65a1.250 1.250 0 1 0 2.500 0a1.250 1.250 0 1 0 -2.500 0zM692.55 541.65a1.250 1.250 0 1 0 2.500 0a1.250 1.250 0 1 0 -2.500 0zM696.60 541.65a1.250 1.250 0 1 0 2.500 0a1.250 1.250 0 1 0 -2.500 0zM700.65 541.65a1.250 1.250 0 1 0 2.500 0a1.250 1.250 0 1 0 -2.500 0z" fill="#1a1a1a"/>
<g filter="url(#bl1)">
<path d="M450 552 Q476 528 508 514 L524 506 L546 526 L581 500 Q630 516 668 552Z" fill="url(#batikR)"/>
<path d="M552 552 L566 518 L581 500 Q626 512 668 552Z" fill="url(#batikB)"/>
<path d="M526 496 L582 492 L582 506 Q566 526 548 526 Q534 518 526 508Z" fill="#7a5a4a"/>
<ellipse cx="593" cy="474" rx="5" ry="11" fill="#8e6a5a"/>
<path d="M507 456 Q503 424 528 412 Q552 404 574 414 Q593 428 591 462 Q590 482 584 494 Q576 508 560 513 Q548 516 534 512 Q520 506 513 490 Q508 476 507 456Z" fill="url(#faceI)"/>
<path d="M522 420 Q548 406 578 420 Q550 412 526 428Z" fill="#c8a892" opacity=".8"/>
<path d="M520 500 Q546 520 580 498 Q574 510 560 514 Q546 517 532 512Z" fill="#6a4c40" opacity=".6"/>
<path d="M517 442 Q526 438 536 442" stroke="#3a2a24" stroke-width="2.200" fill="none"/><path d="M552 440 Q562 436 572 441" stroke="#3a2a24" stroke-width="2.200" fill="none"/>
<ellipse cx="526" cy="447" rx="5" ry="2" fill="#2a1c18"/><ellipse cx="561" cy="446" rx="5" ry="2" fill="#2a1c18"/>
<ellipse cx="541" cy="461" rx="8" ry="5" fill="#8a6654"/>
<path d="M524 481 Q532 475 541 478 Q550 475 560 481 Q542 489 524 481Z" fill="#74504a"/>
</g></g>
<rect x="396.0" y="533.0" width="253.0" height="15.5" fill="#2b2b2b" opacity="0.820"/><text x="400.0" y="546.3" font-family="Liberation Sans, sans-serif" font-size="13.1" fill="#fff" stroke="#fff" stroke-width="0.450" textLength="246.0" lengthAdjust="spacingAndGlyphs">P2STPFRZR_Ida Bagus Gede Putra Pratama</text>
<g clip-path="url(#c6)">
<rect x="824" y="371" width="101" height="178" fill="url(#wall6)"/>
<g filter="url(#bl05)">
<path d="M824 371 H925 V432 L894 418 L824 377Z" fill="#ecece8"/>
<path d="M824 377 L894 418" stroke="#bdbdb6" stroke-width="0.800"/>
<path d="M894 418 L911 520" stroke="#b4b4ac" stroke-width="1"/>
<rect x="912" y="432" width="13" height="117" fill="#d0d0c8"/>
<path d="M824 522 Q838 514 848 512 L858 549 L824 549Z" fill="#474a48"/>
<path d="M878 517 Q898 510 912 524 Q922 536 925 549 L884 549Z" fill="#4a4d4b"/>
<path d="M846.700 513 L853 508.700 L863.600 521.400 L878.400 517 L889 549 L857 549 L851 532Z" fill="#ecd4d6"/>
<path d="M853 509 L862 522 L856 530 L848 514Z" fill="#f2dcde"/>
<path d="M858 540 L861 549 M870 530 L873 549" stroke="#666" stroke-width="0.800"/>
<path d="M856 500 L884 504 L880 519 L863 521Z" fill="#7e5e4e"/>
<path d="M849 482 Q847 468 856 464 Q872 460 884 468 Q890 478 888 494 Q886 508 878 513 Q866 515 858 506 Q851 496 849 482Z" fill="#94725f"/>
<path d="M848 482 Q845 464 858 459 Q870 455 880 460 Q884 464 882 470 Q874 466 864 470 Q856 474 852 486Z" fill="#231f1f"/>
<ellipse cx="848.500" cy="488" rx="2.500" ry="5" fill="#86665a"/>
<rect x="858" y="480" width="14" height="8.500" rx="2" fill="#3a3440" fill-opacity=".4" stroke="#1c1a22" stroke-width="1.600"/><rect x="876" y="482" width="12" height="8.500" rx="2" fill="#3a3440" fill-opacity=".4" stroke="#1c1a22" stroke-width="1.600"/><path d="M850 482 L858 482.500 M872 484 L876 485" stroke="#1c1a22" stroke-width="1.400"/>
<path d="M872 502 Q877 500 882 502" stroke="#5a3e38" stroke-width="1.400" fill="none"/>
</g></g>
<text x="719" y="546.300" font-family="Liberation Sans, sans-serif" font-size="13.100" fill="#fff" stroke="#fff" stroke-width="0.450" textLength="102" lengthAdjust="spacingAndGlyphs">Gagah Sp.JP Jogja</text>
<g clip-path="url(#c8)">
<rect x="396" y="549" width="319" height="180" fill="#fdfdfd"/>
<circle cx="420.4" cy="572.0" r="19.200" fill="#fff"/>
<circle cx="420.4" cy="572.0" r="15" fill="none" stroke="#666" stroke-width="0.500"/>
<g transform="translate(420.4 572.0)"><text font-family="Liberation Sans, sans-serif" font-weight="bold" font-size="3.300" fill="#3c3c3c" letter-spacing="0.150"><textPath href="#sealTop" startOffset="50%" text-anchor="middle">BADAN PENGAWAS TENAGA NUKLIR</textPath></text><text font-family="Liberation Sans, sans-serif" font-weight="bold" font-size="3.400" fill="#222" letter-spacing="0.700"><textPath href="#sealBot" startOffset="50%" text-anchor="middle">BAPETEN</textPath></text><circle cx="-16.300" cy="6.800" r="0.500" fill="#444"/><circle cx="16.300" cy="6.800" r="0.500" fill="#444"/></g>
<g transform="translate(420.40 571.70) scale(1.040)"><path d="M0 -9 C1.500 -9 1.800 -7.500 1.200 -6.500 L2.200 -4.500 C5 -4.500 8 -7 10 -10.500 C12.200 -6 11.500 -1 9 2.500 C7 5 4.500 5.500 3 5 L3.600 9.500 L0 11.500 L-3.600 9.500 L-3 5 C-4.500 5.500 -7 5 -9 2.500 C-11.500 -1 -12.200 -6 -10 -10.500 C-8 -7 -5 -4.500 -2.200 -4.500 L-1.200 -6.500 C-1.800 -7.500 -1.500 -9 0 -9Z" fill="#a8903a"/><path d="M9.600 -8 C10.400 -4 9.800 -1 8 1.800 M7.600 -6.200 C8.200 -3 7.600 -0.500 6.200 2 M-9.600 -8 C-10.400 -4 -9.800 -1 -8 1.800 M-7.600 -6.200 C-8.200 -3 -7.600 -0.500 -6.200 2" fill="none" stroke="#7a6420" stroke-width="0.500"/><path d="M-1.400 -8 L-2.600 -7.400 L-1.200 -7.100Z" fill="#a8903a"/><path d="M-2.400 -3.600 H2.400 V1.400 Q2.400 3.800 0 5 Q-2.400 3.800 -2.400 1.400Z" fill="#c2302a"/><path d="M-2.400 -0.200 H2.400 V1.400 Q2.400 3.800 0 5 Q-2.400 3.800 -2.400 1.400Z" fill="#f0ece4"/><rect x="-1" y="-1.600" width="2" height="2.800" fill="#1a1a1a"/><path d="M-5.600 8.600 Q0 11 5.600 8.600" fill="none" stroke="#f4f4f0" stroke-width="1.300"/><path d="M-5.600 8.600 Q0 11 5.600 8.600" fill="none" stroke="#777" stroke-width="0.300" transform="translate(0 0.800)"/></g>
<path d="M446.52 578.99 A17.90 17.90 0 0 1 461.44 554.17 L462.10 561.74 A10.30 10.30 0 0 0 453.52 576.02 Z" fill="#e8332a"/>
<path d="M465.18 554.23 A17.90 17.90 0 0 1 479.82 578.12 L472.68 575.52 A10.30 10.30 0 0 0 464.26 561.78 Z" fill="#cfba5c"/>
<path d="M477.48 582.52 A17.90 17.90 0 0 1 448.89 583.02 L454.88 578.34 A10.30 10.30 0 0 0 471.33 578.05 Z" fill="#1b5e2a"/>
<circle cx="463.0" cy="572.0" r="7.300" fill="#fff" stroke="#b0b0b8" stroke-width="0.800"/>
<g transform="translate(463.00 571.80) scale(0.460)"><path d="M0 -9 C1.500 -9 1.800 -7.500 1.200 -6.500 L2.200 -4.500 C5 -4.500 8 -7 10 -10.500 C12.200 -6 11.500 -1 9 2.500 C7 5 4.500 5.500 3 5 L3.600 9.500 L0 11.500 L-3.600 9.500 L-3 5 C-4.500 5.500 -7 5 -9 2.500 C-11.500 -1 -12.200 -6 -10 -10.500 C-8 -7 -5 -4.500 -2.200 -4.500 L-1.200 -6.500 C-1.800 -7.500 -1.500 -9 0 -9Z" fill="#a8903a"/><path d="M-2.400 -3.600 H2.400 V1.400 Q2.400 3.800 0 5 Q-2.400 3.800 -2.400 1.400Z" fill="#c2302a"/><path d="M-2.400 -0.200 H2.400 V1.400 Q2.400 3.800 0 5 Q-2.400 3.800 -2.400 1.400Z" fill="#f0ece4"/><rect x="-1" y="-1.600" width="2" height="2.800" fill="#1a1a1a"/><path d="M-5.600 8.600 Q0 11 5.600 8.600" fill="none" stroke="#f4f4f0" stroke-width="1.300"/><path d="M-5.600 8.600 Q0 11 5.600 8.600" fill="none" stroke="#777" stroke-width="0.300" transform="translate(0 0.800)"/></g>
<text x="463.0" y="588.3" text-anchor="middle" font-family="Liberation Sans, sans-serif" font-weight="bold" font-size="3.200" fill="#f0f6ea" textLength="9.500">Tangguh</text>
<text x="488.4" y="565.9" font-family="Liberation Sans, sans-serif" font-weight="bold" font-size="6.500" fill="#101c30" stroke="#101c30" stroke-width="0.250" textLength="180" lengthAdjust="spacingAndGlyphs">Pusat Pengkajian Sistem dan Teknologi Pengawasan</text>
<text x="488.4" y="574.7" font-family="Liberation Sans, sans-serif" font-weight="bold" font-size="6.500" fill="#101c30" stroke="#101c30" stroke-width="0.250" textLength="165" lengthAdjust="spacingAndGlyphs">Fasilitas Radiasi dan Zat Radioaktif (P2STPFRZR)</text>
<text x="488.4" y="583.2" font-family="Liberation Sans, sans-serif" font-size="6.600" fill="#2a3340" textLength="116" lengthAdjust="spacingAndGlyphs">Terkini, Akurat, Sistematis, Konkret</text>
<text x="401.3" y="603.3" font-family="Liberation Sans, sans-serif" font-weight="bold" font-size="6.200" textLength="37.500" lengthAdjust="spacingAndGlyphs"><tspan fill="#a83a4a" stroke="#a83a4a" stroke-width="0.250">Ber</tspan><tspan fill="#d0242e" stroke="#d0242e" stroke-width="0.300">AKHLAK</tspan></text>
<path d="M436.5 599.0 l3.400 -3.600 l-1.400 -1.400" fill="none" stroke="#3a3a3a" stroke-width="0.600"/>
<rect x="401.3" y="605.3" width="37.500" height="0.900" fill="#8a9098"/>
<rect x="401.3" y="607.3" width="28" height="0.900" fill="#a0a6ae"/>
<text x="407.8" y="624.0" font-family="Liberation Sans, sans-serif" font-weight="bold" font-style="italic" font-size="12.500" fill="#d0242e">#</text>
<text x="415.5" y="616.6" font-family="Liberation Sans, sans-serif" font-weight="bold" font-size="3.800" fill="#2a2a2a" textLength="15.500" lengthAdjust="spacingAndGlyphs">bangga</text>
<text x="415.0" y="620.3" font-family="Liberation Sans, sans-serif" font-size="3.800" fill="#c8323a" textLength="18.500" lengthAdjust="spacingAndGlyphs">melayani</text>
<text x="414.5" y="624.0" font-family="Liberation Sans, sans-serif" font-size="3.800" fill="#c8323a" textLength="15.500" lengthAdjust="spacingAndGlyphs">bangsa</text>
<rect x="412.0" y="701.0" width="4.700" height="4.700" fill="#0c1c28"/>
<rect x="428.0" y="701.0" width="4.700" height="4.700" fill="#0c1c28"/>
<rect x="404.0" y="709.0" width="4.700" height="4.700" fill="#0c1c28"/>
<rect x="412.0" y="709.0" width="4.700" height="4.700" fill="#0c1c28"/>
<rect x="420.0" y="709.0" width="4.700" height="4.700" fill="#0c1c28"/>
<rect x="428.0" y="709.0" width="4.700" height="4.700" fill="#0c1c28"/>
<rect x="436.0" y="709.0" width="4.700" height="4.700" fill="#0c1c28"/>
<rect x="692.2" y="666.0" width="3.800" height="3.800" fill="#0c1c28"/>
<rect x="686.3" y="666.0" width="3.800" height="3.800" fill="#0c1c28"/>
<rect x="698.1" y="666.0" width="3.800" height="3.800" fill="#0c1c28"/>
<rect x="692.2" y="660.1" width="3.800" height="3.800" fill="#0c1c28"/>
<rect x="692.2" y="671.9" width="3.800" height="3.800" fill="#0c1c28"/>
<path d="M688.50 692.30a1.250 1.250 0 1 0 2.500 0a1.250 1.250 0 1 0 -2.500 0zM692.55 692.30a1.250 1.250 0 1 0 2.500 0a1.250 1.250 0 1 0 -2.500 0zM696.60 692.30a1.250 1.250 0 1 0 2.500 0a1.250 1.250 0 1 0 -2.500 0zM700.65 692.30a1.250 1.250 0 1 0 2.500 0a1.250 1.250 0 1 0 -2.500 0zM688.50 696.35a1.250 1.250 0 1 0 2.500 0a1.250 1.250 0 1 0 -2.500 0zM692.55 696.35a1.250 1.250 0 1 0 2.500 0a1.250 1.250 0 1 0 -2.500 0zM696.60 696.35a1.250 1.250 0 1 0 2.500 0a1.250 1.250 0 1 0 -2.500 0zM700.65 696.35a1.250 1.250 0 1 0 2.500 0a1.250 1.250 0 1 0 -2.500 0zM688.50 700.40a1.250 1.250 0 1 0 2.500 0a1.250 1.250 0 1 0 -2.500 0zM692.55 700.40a1.250 1.250 0 1 0 2.500 0a1.250 1.250 0 1 0 -2.500 0zM696.60 700.40a1.250 1.250 0 1 0 2.500 0a1.250 1.250 0 1 0 -2.500 0zM700.65 700.40a1.250 1.250 0 1 0 2.500 0a1.250 1.250 0 1 0 -2.500 0zM688.50 704.45a1.250 1.250 0 1 0 2.500 0a1.250 1.250 0 1 0 -2.500 0zM692.55 704.45a1.250 1.250 0 1 0 2.500 0a1.250 1.250 0 1 0 -2.500 0zM696.60 704.45a1.250 1.250 0 1 0 2.500 0a1.250 1.250 0 1 0 -2.500 0zM700.65 704.45a1.250 1.250 0 1 0 2.500 0a1.250 1.250 0 1 0 -2.500 0zM660.15 708.50a1.250 1.250 0 1 0 2.500 0a1.250 1.250 0 1 0 -2.500 0zM664.20 708.50a1.250 1.250 0 1 0 2.500 0a1.250 1.250 0 1 0 -2.500 0zM668.25 708.50a1.250 1.250 0 1 0 2.500 0a1.250 1.250 0 1 0 -2.500 0zM672.30 708.50a1.250 1.250 0 1 0 2.500 0a1.250 1.250 0 1 0 -2.500 0zM676.35 708.50a1.250 1.250 0 1 0 2.500 0a1.250 1.250 0 1 0 -2.500 0zM680.40 708.50a1.250 1.250 0 1 0 2.500 0a1.250 1.250 0 1 0 -2.500 0zM684.45 708.50a1.250 1.250 0 1 0 2.500 0a1.250 1.250 0 1 0 -2.500 0zM688.50 708.50a1.250 1.250 0 1 0 2.500 0a1.250 1.250 0 1 0 -2.500 0zM692.55 708.50a1.250 1.250 0 1 0 2.500 0a1.250 1.250 0 1 0 -2.500 0zM696.60 708.50a1.250 1.250 0 1 0 2.500 0a1.250 1.250 0 1 0 -2.500 0zM700.65 708.50a1.250 1.250 0 1 0 2.500 0a1.250 1.250 0 1 0 -2.500 0zM660.15 712.55a1.250 1.250 0 1 0 2.500 0a1.250 1.250 0 1 0 -2.500 0zM664.20 712.55a1.250 1.250 0 1 0 2.500 0a1.250 1.250 0 1 0 -2.500 0zM668.25 712.55a1.250 1.250 0 1 0 2.500 0a1.250 1.250 0 1 0 -2.500 0zM672.30 712.55a1.250 1.250 0 1 0 2.500 0a1.250 1.250 0 1 0 -2.500 0zM676.35 712.55a1.250 1.250 0 1 0 2.500 0a1.250 1.250 0 1 0 -2.500 0zM680.40 712.55a1.250 1.250 0 1 0 2.500 0a1.250 1.250 0 1 0 -2.500 0zM684.45 712.55a1.250 1.250 0 1 0 2.500 0a1.250 1.250 0 1 0 -2.500 0zM688.50 712.55a1.250 1.250 0 1 0 2.500 0a1.250 1.250 0 1 0 -2.500 0zM692.55 712.55a1.250 1.250 0 1 0 2.500 0a1.250 1.250 0 1 0 -2.500 0zM696.60 712.55a1.250 1.250 0 1 0 2.500 0a1.250 1.250 0 1 0 -2.500 0zM700.65 712.55a1.250 1.250 0 1 0 2.500 0a1.250 1.250 0 1 0 -2.500 0zM660.15 716.60a1.250 1.250 0 1 0 2.500 0a1.250 1.250 0 1 0 -2.500 0zM664.20 716.60a1.250 1.250 0 1 0 2.500 0a1.250 1.250 0 1 0 -2.500 0zM668.25 716.60a1.250 1.250 0 1 0 2.500 0a1.250 1.250 0 1 0 -2.500 0zM672.30 716.60a1.250 1.250 0 1 0 2.500 0a1.250 1.250 0 1 0 -2.500 0zM676.35 716.60a1.250 1.250 0 1 0 2.500 0a1.250 1.250 0 1 0 -2.500 0zM680.40 716.60a1.250 1.250 0 1 0 2.500 0a1.250 1.250 0 1 0 -2.500 0zM684.45 716.60a1.250 1.250 0 1 0 2.500 0a1.250 1.250 0 1 0 -2.500 0zM688.50 716.60a1.250 1.250 0 1 0 2.500 0a1.250 1.250 0 1 0 -2.500 0zM692.55 716.60a1.250 1.250 0 1 0 2.500 0a1.250 1.250 0 1 0 -2.500 0zM696.60 716.60a1.250 1.250 0 1 0 2.500 0a1.250 1.250 0 1 0 -2.500 0zM700.65 716.60a1.250 1.250 0 1 0 2.500 0a1.250 1.250 0 1 0 -2.500 0zM660.15 720.65a1.250 1.250 0 1 0 2.500 0a1.250 1.250 0 1 0 -2.500 0zM664.20 720.65a1.250 1.250 0 1 0 2.500 0a1.250 1.250 0 1 0 -2.500 0zM668.25 720.65a1.250 1.250 0 1 0 2.500 0a1.250 1.250 0 1 0 -2.500 0zM672.30 720.65a1.250 1.250 0 1 0 2.500 0a1.250 1.250 0 1 0 -2.500 0zM676.35 720.65a1.250 1.250 0 1 0 2.500 0a1.250 1.250 0 1 0 -2.500 0zM680.40 720.65a1.250 1.250 0 1 0 2.500 0a1.250 1.250 0 1 0 -2.500 0zM684.45 720.65a1.250 1.250 0 1 0 2.500 0a1.250 1.250 0 1 0 -2.500 0zM688.50 720.65a1.250 1.250 0 1 0 2.500 0a1.250 1.250 0 1 0 -2.500 0zM692.55 720.65a1.250 1.250 0 1 0 2.500 0a1.250 1.250 0 1 0 -2.500 0zM696.60 720.65a1.250 1.250 0 1 0 2.500 0a1.250 1.250 0 1 0 -2.500 0zM700.65 720.65a1.250 1.250 0 1 0 2.500 0a1.250 1.250 0 1 0 -2.500 0z" fill="#1a1a1a"/>
<g filter="url(#bl1)">
<path d="M504 732 Q506 712 522 703 L534 700 L540 732Z" fill="#e2eaf6"/>
<path d="M596 720 Q630 712 664 728 L666 732 L594 732Z" fill="#e2eaf6"/>
<path d="M516 708 L522 704 L527 732 L518 732Z" fill="#2c4a9c"/>
<ellipse cx="518.500" cy="667" rx="8.500" ry="15" fill="#a08070"/><ellipse cx="519" cy="668" rx="4" ry="9" fill="#7a5a4c"/>
<path d="M522 650 Q540 630 566 622 Q592 620 611 630 Q613 670 610 700 Q606 720 600 732 L528 732 Q527 700 524 684Z" fill="url(#faceR)"/>
<ellipse cx="540" cy="700" rx="16" ry="34" fill="#6a5044" opacity=".5" filter="url(#bl3)"/>
<ellipse cx="598" cy="680" rx="8" ry="12" fill="#b89888" opacity=".7" filter="url(#bl2)"/>
<path d="M518 648 Q530 644 544 638 L540 656 Q530 662 523 656Z" fill="#2a2420"/>
<path d="M560 652 Q572 645 586 651" stroke="#2a1e1a" stroke-width="2.600" fill="none"/><path d="M598 654 Q604 651 610 656" stroke="#2a1e1a" stroke-width="2.400" fill="none"/>
<ellipse cx="574" cy="659" rx="5.500" ry="2.200" fill="#1e1614"/><ellipse cx="605" cy="664" rx="3.600" ry="2" fill="#1e1614"/>
<path d="M594 668 Q600 684 596 690 L588 691" stroke="#6a4e42" stroke-width="2" fill="none"/>
<path d="M572 705 Q582 694 596 695 Q606 697 608 704 Q600 703 592 707 Q580 711 572 705Z" fill="#1c1614"/>
<path d="M515 649 Q514 620 528 604 Q540 590 556 587 Q566 584 580 586 Q598 588 606 606 Q613 622 613.500 646 Q606 632 590 631 Q566 632 548 640 Q530 646 515 649Z" fill="url(#capP)"/>
<path d="M516 647 Q540 640 562 634 Q590 628 612 642" fill="none" stroke="#7a6248" stroke-width="1.600" opacity=".8"/>
<path d="M542 612 Q550 598 560 596 Q566 608 576 607 Q590 604 600 610" fill="none" stroke="#a08a60" stroke-width="2" opacity=".85"/>
</g></g>
<rect x="528.0" y="674.0" width="55.0" height="16.5" fill="#2b2b2b" opacity="0.820"/><text x="532.0" y="688.3" font-family="Liberation Sans, sans-serif" font-size="14.1" fill="#fff" stroke="#fff" stroke-width="0.450" textLength="47.0" lengthAdjust="spacingAndGlyphs">send dir</text>
<rect x="396.0" y="713.0" width="66.0" height="15.5" fill="#2b2b2b" opacity="0.820"/><text x="400.0" y="726.3" font-family="Liberation Sans, sans-serif" font-size="13.1" fill="#fff" stroke="#fff" stroke-width="0.450" textLength="58.0" lengthAdjust="spacingAndGlyphs">Rusmanto</text>
<text x="904" y="704.600" font-family="Liberation Sans, sans-serif" font-size="37.200" fill="#8c8c8c" stroke="#8c8c8c" stroke-width="2.100" stroke-linejoin="round" textLength="103.500" lengthAdjust="spacingAndGlyphs">zoom</text>
</svg></div>
<!-- video info -->
<div id="vtitle" class="t" style="left:65px;top:752px;font-size:22px;line-height:28px;font-weight:bold;letter-spacing:-0.475px">Diseminasi Tingkat Panduan Diagnostik</div>
<svg class="abs" style="left:66px;top:792px" width="43" height="43" viewBox="0 0 44 44"><defs><path id="avTop" d="M3.600 27.800 A19.300 19.300 0 1 1 40.400 27.800"/><path id="avBot" d="M7.500 36 A20.400 20.400 0 0 0 36.500 36"/></defs><circle cx="22" cy="22" r="21.800" fill="#fff"/><circle cx="22" cy="22" r="16.800" fill="none" stroke="#666" stroke-width="0.600"/><text font-family="Liberation Sans, sans-serif" font-weight="bold" font-size="3.700" fill="#3c3c3c" letter-spacing="0.200"><textPath href="#avTop" startOffset="50%" text-anchor="middle">BADAN PENGAWAS TENAGA NUKLIR</textPath></text><text font-family="Liberation Sans, sans-serif" font-weight="bold" font-size="3.900" fill="#222" letter-spacing="0.800"><textPath href="#avBot" startOffset="50%" text-anchor="middle">BAPETEN</textPath></text><g transform="translate(22 21.600) scale(1.160)"><path d="M0 -9 C1.500 -9 1.800 -7.500 1.200 -6.500 L2.200 -4.500 C5 -4.500 8 -7 10 -10.500 C12.200 -6 11.500 -1 9 2.500 C7 5 4.500 5.500 3 5 L3.600 9.500 L0 11.500 L-3.600 9.500 L-3 5 C-4.500 5.500 -7 5 -9 2.500 C-11.500 -1 -12.200 -6 -10 -10.500 C-8 -7 -5 -4.500 -2.200 -4.500 L-1.200 -6.500 C-1.800 -7.500 -1.500 -9 0 -9Z" fill="#bf9a2c"/><path d="M9.600 -8 C10.400 -4 9.800 -1 8 1.800 M7.600 -6.200 C8.200 -3 7.600 -0.500 6.200 2 M-9.600 -8 C-10.400 -4 -9.800 -1 -8 1.800 M-7.600 -6.200 C-8.200 -3 -7.600 -0.500 -6.200 2" fill="none" stroke="#7a6420" stroke-width="0.500"/><path d="M-2.400 -3.600 H2.400 V1.400 Q2.400 3.800 0 5 Q-2.400 3.800 -2.400 1.400Z" fill="#c2302a"/><path d="M-2.400 -0.200 H2.400 V1.400 Q2.400 3.800 0 5 Q-2.400 3.800 -2.400 1.400Z" fill="#f0ece4"/><rect x="-1" y="-1.600" width="2" height="2.800" fill="#1a1a1a"/><path d="M-5.600 8.600 Q0 11 5.600 8.600" fill="none" stroke="#f4f4f0" stroke-width="1.300"/></g></svg>
<div id="chname" class="t" style="left:123px;top:793px;font-size:17.600px;line-height:24px;letter-spacing:-0.467px;color:#0f0f0f">P2STPFRZR - BAPETEN</div>
<div id="subs" class="t" style="left:123px;top:817px;font-size:13.200px;line-height:20px;color:#606060;letter-spacing:0.169px">169 subscriber</div>
<div class="abs" style="left:343px;top:795px;width:106px;height:40px;border-radius:20px;background:#0f0f0f"></div>
<div id="subbtn" class="t" style="left:343px;top:804px;width:106px;text-align:center;font-size:15.400px;line-height:20px;font-weight:bold;color:#fff;letter-spacing:-0.502px">Subscribe</div>
<!-- like / dislike -->
<div class="pill" style="left:611px;top:795px;width:130px;height:40px"></div>
<div class="abs" style="left:682px;top:803px;width:1px;height:24px;background:#d4d4d4"></div>
<svg class="abs" style="left:623px;top:802px" width="26" height="26" viewBox="0 0 26 26"><path d="M2.200 12.500 H7.200 V24 H2.200 Z M8.600 12 L13.200 3.800 Q14.200 2.200 15.800 3 Q17.600 4 17 6.400 L16 10.600 H21.600 Q24 10.800 23.800 13.200 L22.400 21.200 Q21.800 24 19 24 H8.600Z" fill="#0f0f0f"/></svg>
<div class="t" style="left:655.500px;top:805px;font-size:15.400px;line-height:20px;-webkit-text-stroke:0.500px #0f0f0f;color:#0f0f0f">3</div>
<svg class="abs" style="left:697px;top:802px" width="26" height="26" viewBox="0 0 26 26"><path d="M18.600 14 L13.600 22.600 Q12.600 23.800 11.200 23 Q9.800 22 10.200 20 L11.200 15.600 H5 Q2.800 15.400 3 13.200 L4.400 5.400 Q5 3 7.400 3 H18.600 Z M18.600 3 H23 V14 H18.600" fill="none" stroke="#0f0f0f" stroke-width="1.900" stroke-linejoin="round"/></svg>
<!-- share -->
<div class="pill" style="left:751px;top:795px;width:119px;height:40px"></div>
<svg class="abs" style="left:762px;top:802px" width="28" height="26" viewBox="0 0 28 26"><path d="M15.500 3.500 L25.500 12.500 L15.500 21.500 V16.500 Q7 16 2.500 22.500 Q3.500 9.500 15.500 8.500Z" fill="none" stroke="#0f0f0f" stroke-width="1.900" stroke-linejoin="round"/></svg>
<div id="bagi" class="t" style="left:796px;top:805px;font-size:15.400px;line-height:20px;font-weight:normal;-webkit-text-stroke:0.55px #0f0f0f;letter-spacing:0px">Bagikan</div>
<!-- save -->
<div class="pill" style="left:880px;top:795px;width:116px;height:40px"></div>
<svg class="abs" style="left:892px;top:803px" width="24" height="26" viewBox="0 0 24 26"><path d="M2.500 2 H21.500 V23.500 L12 17 L2.500 23.500Z" fill="none" stroke="#0f0f0f" stroke-width="1.900" stroke-linejoin="round"/></svg>
<div id="simp" class="t" style="left:925px;top:805px;font-size:15.400px;line-height:20px;font-weight:normal;-webkit-text-stroke:0.55px #0f0f0f;letter-spacing:0px">Simpan</div>
<div class="pill" style="left:1005px;top:795px;width:40px;height:40px"></div>
<svg class="abs" style="left:1015px;top:812px" width="20" height="6" viewBox="0 0 20 6"><circle cx="3" cy="3" r="2.100" fill="#0f0f0f"/><circle cx="10" cy="3" r="2.100" fill="#0f0f0f"/><circle cx="17" cy="3" r="2.100" fill="#0f0f0f"/></svg>
<!-- chat panel -->
<div class="abs" style="left:1063px;top:186px;width:453px;height:680px;border-radius:13px;border:1px solid #e2e2e2;background:#fff"></div>
<div class="abs" style="left:1064px;top:241px;width:451px;height:1px;background:#e5e5e5"></div>
<div id="chtop" class="t" style="left:1091px;top:201px;font-size:17.600px;line-height:24px;letter-spacing:0.122px">Chat teratas</div>
<svg class="abs" style="left:1193px;top:206px" width="20" height="16" viewBox="0 0 20 16"><path d="M2.500 4 L10 11.500 L17.500 4" fill="none" stroke="#0f0f0f" stroke-width="2" stroke-linecap="round" stroke-linejoin="round"/></svg>
<div class="abs" style="left:1352px;top:201px;width:63px;height:26px;border-radius:13px;border:1px solid #e2e2e2;background:#fff"></div>
<svg class="abs" style="left:1358px;top:206px" width="18" height="15" viewBox="0 0 18 15"><path d="M0.500 11 V2.500 L4.800 6 L9 0.800 L13.200 6 L17.500 2.500 V11Z" fill="#9b5cf6"/><rect x="0.500" y="12" width="17" height="2.400" fill="#a974ff"/></svg>
<div id="xp" class="t" style="left:1378px;top:204px;font-size:15.400px;line-height:20px;letter-spacing:0.303px;color:#0f0f0f">0XP</div>
<svg class="abs" style="left:1434px;top:202px" width="8" height="24" viewBox="0 0 8 24"><circle cx="4" cy="4" r="2.200" fill="#0f0f0f"/><circle cx="4" cy="12" r="2.200" fill="#0f0f0f"/><circle cx="4" cy="20" r="2.200" fill="#0f0f0f"/></svg>
<svg class="abs" style="left:1473px;top:203px" width="22" height="22" viewBox="0 0 22 22"><path d="M3 3 L19 19 M19 3 L3 19" stroke="#0f0f0f" stroke-width="2" stroke-linecap="round"/></svg>
<svg class="abs" style="left:1498px;top:246px" width="14" height="11" viewBox="0 0 14 11"><path d="M7 1.300 Q7.700 1.300 8.200 2 L12.600 8.200 Q13.200 9.600 11.800 9.700 H2.200 Q0.800 9.600 1.400 8.200 L5.800 2 Q6.300 1.300 7 1.300Z" fill="#5f5f5f"/></svg>
<svg class="abs" style="left:1498px;top:777px" width="14" height="11" viewBox="0 0 14 11"><path d="M7 9.700 Q7.700 9.700 8.200 9 L12.600 2.800 Q13.200 1.400 11.800 1.300 H2.200 Q0.800 1.400 1.400 2.800 L5.800 9 Q6.300 9.700 7 9.700Z" fill="#5f5f5f"/></svg>
<!-- welcome box -->
<div class="abs" style="left:1091px;top:663px;width:378px;height:119px;border-radius:4px;background:#eeeeee"></div>
<svg class="abs" style="left:1111px;top:682px" width="23" height="16" viewBox="0 0 23 16"><path d="M3.500 0.500 Q11.500 -0.300 19.500 0.500 Q22.200 0.800 22.500 3.500 Q23.200 8 22.500 12.500 Q22.200 15.200 19.500 15.500 Q11.500 16.300 3.500 15.500 Q0.800 15.200 0.500 12.500 Q-0.200 8 0.500 3.500 Q0.800 0.800 3.500 0.500Z" fill="#ff0033"/><path d="M9.200 4.600 L15.200 8 L9.200 11.400Z" fill="#fff"/></svg>
<div id="w1" class="t" style="left:1154px;top:677px;font-size:14.300px;line-height:17.600px;color:#0f0f0f;letter-spacing:-0.363px">Selamat datang di live chat! Ingatlah untuk</div>
<div id="w2" class="t" style="left:1154px;top:694.600px;font-size:14.300px;line-height:17.600px;color:#0f0f0f;letter-spacing:-0.360px">melindungi privasi Anda dan mematuhi pedoman</div>
<div id="w3" class="t" style="left:1154px;top:712.200px;font-size:14.300px;line-height:17.600px;color:#0f0f0f;letter-spacing:-0.271px">komunitas kami.</div>
<div id="w4" class="t" style="left:1154px;top:742px;font-size:15.400px;line-height:22px;color:#065fd4;letter-spacing:0.233px;-webkit-text-stroke:0.350px #065fd4">Pelajari lebih lanjut</div>
<div class="abs" style="left:1064px;top:792px;width:451px;height:1px;background:#e5e5e5"></div>
<div class="abs" style="left:1091px;top:804px;width:343px;height:42px;border-radius:21px;background:#f2f2f2"></div>
<div id="chatph" class="t" style="left:1104px;top:813px;font-size:16.500px;line-height:22px;color:#717171;letter-spacing:-0.702px">Chat...</div>
<svg class="abs" style="left:1400px;top:811px" width="26" height="26" viewBox="0 0 26 26"><circle cx="13" cy="13" r="11.500" fill="none" stroke="#0f0f0f" stroke-width="1.900"/><circle cx="9" cy="10" r="1.700" fill="#0f0f0f"/><circle cx="17" cy="10" r="1.700" fill="#0f0f0f"/><path d="M7.500 15 Q13 21.500 18.500 15" fill="none" stroke="#0f0f0f" stroke-width="1.900" stroke-linecap="round"/></svg>
<div class="abs" style="left:1447px;top:804px;width:41px;height:41px;border-radius:21px;background:#f2f2f2"></div>
<svg class="abs" style="left:1454px;top:812px" width="28" height="26" viewBox="0 0 28 26"><path d="M14 23.500 Q2.500 15 2.500 8.500 Q2.500 2.500 8.300 2.500 Q12 2.500 14 6 Q16 2.500 19.700 2.500 Q25.500 2.500 25.500 8.500 Q25.500 15 14 23.500Z" fill="none" stroke="#0f0f0f" stroke-width="1.900" stroke-linejoin="round"/></svg>
<!-- taskbar -->
<div id="taskbar">
<!-- weather -->
<svg class="abs" style="left:24px;top:9px" width="36" height="40" viewBox="0 0 36 40"><defs><linearGradient id="sun" x1="0" y1="0" x2="1" y2="1"><stop offset="0" stop-color="#ffc93c"/><stop offset="1" stop-color="#f0761c"/></linearGradient></defs><circle cx="14" cy="24" r="11.500" fill="url(#sun)"/><path d="M14 32 Q14 28 18 28 Q19 24.500 23 25.500 Q27 25 27.500 28.500 Q31 28.500 31 31 Q31 33.500 28 33.500 H16.500 Q14 33.500 14 32Z" fill="#c9d6ea"/><circle cx="26" cy="9" r="8.500" fill="#c9251c"/><text x="26" y="13.500" text-anchor="middle" font-family="Liberation Sans, sans-serif" font-weight="bold" font-size="12" fill="#fff">1</text></svg>
<!-- windows -->
<svg class="abs" style="left:229px;top:16px" width="30" height="30" viewBox="0 0 30 30"><defs><linearGradient id="wn" x1="0" y1="0" x2="1" y2="1"><stop offset="0" stop-color="#5fd0ff"/><stop offset="1" stop-color="#0d83dc"/></linearGradient></defs><g fill="url(#wn)"><rect x="0" y="0" width="14.200" height="14.200" rx="0.800"/><rect x="15.600" y="0" width="14.200" height="14.200" rx="0.800"/><rect x="0" y="15.600" width="14.200" height="14.200" rx="0.800"/><rect x="15.600" y="15.600" width="14.200" height="14.200" rx="0.800"/></g></svg>
<!-- search -->
<div class="abs" style="left:277px;top:12px;width:271px;height:36px;border-radius:18px;background:#f6f6f6"></div>
<svg class="abs" style="left:288px;top:19px" width="22" height="22" viewBox="0 0 22 22"><circle cx="9.500" cy="9.500" r="7" fill="none" stroke="#222" stroke-width="2"/><path d="M14.600 14.600 L20 20" stroke="#222" stroke-width="2.400" stroke-linecap="round"/></svg>
<div id="tsearch" class="t" style="left:321px;top:19px;font-size:17.500px;line-height:22px;color:#4a4a4a;letter-spacing:-1.091px">Search</div>
<svg class="abs" style="left:483px;top:12px" width="64" height="36" viewBox="0 0 64 36"><defs><linearGradient id="sky" x1="0" y1="0" x2="0" y2="1"><stop offset="0" stop-color="#b89ad8"/><stop offset=".5" stop-color="#f0b0b8"/><stop offset="1" stop-color="#f8d088"/></linearGradient><clipPath id="cld"><path d="M6 33 Q0 33 1 26 Q0 18 8 17 Q8 8 17 8 Q22 1 31 3 Q40 0 46 7 Q56 6 57 15 Q63 18 62 26 Q63 33 56 33Z"/></clipPath><filter id="b2"><feGaussianBlur stdDeviation="0.500"/></filter></defs><g clip-path="url(#cld)"><rect width="64" height="36" fill="url(#sky)"/><g filter="url(#b2)"><path d="M30 24 L40 12 L46 18 L52 14 L62 26 V34 H30Z" fill="#8a8ac8"/><path d="M38 15 L40 12 L43 15Z" fill="#fff"/><rect x="22" y="18" width="4" height="12" fill="#6878b0"/><rect x="27" y="14" width="4" height="16" fill="#5a6aa8"/><rect x="32" y="20" width="5" height="10" fill="#7888c0"/><rect x="38" y="17" width="4" height="13" fill="#5a6aa8"/><rect x="43" y="21" width="6" height="9" fill="#6878b0"/><rect x="12.300" y="6" width="1.400" height="24" fill="#4a5a88"/><ellipse cx="13" cy="11" rx="4" ry="1.500" fill="#4a5a88"/><rect x="12.700" y="1" width="0.600" height="6" fill="#4a5a88"/><path d="M0 30 Q10 25 22 30 Q40 27 64 31 V36 H0Z" fill="#5aa868"/><path d="M18 32 Q40 29 64 32 V36 H18Z" fill="#88c8d8"/></g></g></svg>
<!-- task view -->
<svg class="abs" style="left:565px;top:15px" width="31" height="30" viewBox="0 0 31 30"><rect x="0" y="8" width="22" height="21" rx="2.500" fill="#6b6b6b"/><rect x="8" y="0.500" width="22.500" height="21" rx="2.500" fill="#e9e9e9"/><rect x="8" y="8" width="14" height="13.500" fill="#b5b5b5"/></svg>
<!-- M365 -->
<svg class="abs" style="left:619px;top:15px" width="33" height="32" viewBox="0 0 33 32"><defs><linearGradient id="m1" x1="0" y1="0" x2="1" y2="1"><stop offset="0" stop-color="#2bc0f0"/><stop offset=".5" stop-color="#2a62e8"/><stop offset="1" stop-color="#1a3ab8"/></linearGradient><linearGradient id="m2" x1="0" y1="0" x2="0" y2="1"><stop offset="0" stop-color="#38c8a0"/><stop offset=".6" stop-color="#a8d840"/><stop offset="1" stop-color="#f0c030"/></linearGradient><linearGradient id="m3" x1="0" y1="0" x2="1" y2="1"><stop offset="0" stop-color="#9a58f0"/><stop offset="1" stop-color="#f058a8"/></linearGradient></defs><path d="M10 1 H21 Q24.500 1 25.500 4.500 L29 16 H18 L14 4.500 Q13 1 10 1Z" fill="url(#m1)"/><path d="M10 1 Q13 1 14 4.500 L10.500 18 Q9.500 22 6 22 H3 Q0.500 22 1.200 19 L6 4.500 Q7 1 10 1Z" fill="url(#m2)"/><path d="M22.500 8 H28.500 Q31.500 8 30.800 11 L27.500 22.500 Q26.500 26 23 26 H13 Q17 26 18 22.500Z" fill="url(#m3)"/><rect x="9.500" y="20" width="22.500" height="10.500" rx="1.500" fill="#111"/><text x="20.800" y="28.800" text-anchor="middle" font-family="Liberation Sans, sans-serif" font-weight="bold" font-size="8.500" fill="#fff" textLength="19" lengthAdjust="spacingAndGlyphs">M365</text></svg>
<!-- explorer -->
<svg class="abs" style="left:674px;top:16px" width="33" height="30" viewBox="0 0 33 30"><path d="M1 3 Q1 1 3 1 H11 L14 4 H30 Q32 4 32 6 V26 Q32 28 30 28 H3 Q1 28 1 26Z" fill="#f2b01e"/><rect x="1" y="7" width="31" height="21" rx="2" fill="#fbd24a"/><path d="M9 28 V21 Q9 18.500 11.500 18.500 H21.500 Q24 18.500 24 21 V28Z" fill="#1a78d8"/><rect x="12" y="22" width="9" height="2" rx="1" fill="#7ac0f8"/></svg>
<div class="dot" style="left:686px"></div>
<!-- edge -->
<svg class="abs" style="left:729px;top:15px" width="32" height="32" viewBox="0 0 32 32"><defs><linearGradient id="e1" x1="0" y1="0" x2="1" y2="1"><stop offset="0" stop-color="#2fc2df"/><stop offset=".5" stop-color="#1a8ad8"/><stop offset="1" stop-color="#0c4fa8"/></linearGradient><linearGradient id="e2" x1="0" y1="0" x2="1" y2="0"><stop offset="0" stop-color="#35c1f1"/><stop offset="1" stop-color="#6adf5a"/></linearGradient></defs><circle cx="16" cy="16" r="15" fill="url(#e1)"/><path d="M2 12 Q5 1 17 1 Q30 2 31 14 Q31 20 25 21 Q19 21 20 16.500 Q20 11 14 10.500 Q6 10.500 2 17Z" fill="url(#e2)"/><path d="M11.500 16 Q10 23 17 28 Q24 31 29 24 Q23 27 18 23.500 Q13.500 20.500 14.500 16 Q15.500 13 11.500 16Z" fill="#0a3f8a" opacity=".7"/></svg>
<!-- chrome active -->
<div class="abs" style="left:775px;top:5px;width:50px;height:50px;border-radius:6px;background:#2e3033;border:1px solid #3a3c3f"></div>
<svg class="abs" style="left:784px;top:12px" width="40" height="36" viewBox="0 0 40 36"><defs><clipPath id="cpf"><circle cx="28" cy="11" r="10"/></clipPath></defs><circle cx="16" cy="19" r="15" fill="#fff"/><path d="M16 4 A15 15 0 0 1 29 11.500 L16 11.500 L9.500 15.250 L3.010 11.500 A15 15 0 0 1 16 4Z" fill="#ea4335"/><path d="M3.010 11.500 A15 15 0 0 0 16 34 L22.500 22.750 A7.500 7.500 0 0 1 9.500 22.750 Z" fill="#34a853"/><path d="M29 11.500 A15 15 0 0 1 16 34 L22.500 22.750 A7.500 7.500 0 0 0 22.500 15.250 L16 11.500Z" fill="#fbbc04"/><circle cx="16" cy="19" r="7" fill="#fff"/><circle cx="16" cy="19" r="5.600" fill="#4285f4"/><g clip-path="url(#cpf)"><rect x="18" y="1" width="20" height="20" fill="#b8a8a0"/><rect x="18" y="1" width="9" height="20" fill="#2a2626"/><circle cx="25" cy="10" r="2.500" fill="#e0c4b0"/><rect x="30" y="3" width="6" height="5" fill="#d87868"/><rect x="28" y="11" width="9" height="8" fill="#e0d8d0"/></g></svg>
<div class="abs" style="left:790px;top:50px;width:20px;height:4px;border-radius:2px;background:#4cc2ff"></div>
<!-- store -->
<svg class="abs" style="left:839px;top:14px" width="32" height="33" viewBox="0 0 32 33"><path d="M10 8 V5 Q10 2.500 12.500 2.500 H19.500 Q22 2.500 22 5 V8" fill="none" stroke="#3aa0f0" stroke-width="2"/><path d="M1 8 H31 V27 Q31 31 27 31 H5 Q1 31 1 27Z" fill="#f4f4f4"/><rect x="9" y="12" width="6.500" height="6.500" fill="#f25022"/><rect x="16.500" y="12" width="6.500" height="6.500" fill="#7fba00"/><rect x="9" y="19.500" width="6.500" height="6.500" fill="#00a4ef"/><rect x="16.500" y="19.500" width="6.500" height="6.500" fill="#ffb900"/></svg>
<!-- chrome 2 -->
<svg class="abs" style="left:894px;top:9px" width="40" height="40" viewBox="0 0 40 40"><circle cx="16" cy="22" r="15" fill="#fff"/><path d="M16 7 A15 15 0 0 1 29 14.500 L16 14.500 L9.500 18.250 L3.010 14.500 A15 15 0 0 1 16 7Z" fill="#ea4335"/><path d="M3.010 14.500 A15 15 0 0 0 16 37 L22.500 25.750 A7.500 7.500 0 0 1 9.500 25.750 Z" fill="#34a853"/><path d="M29 14.500 A15 15 0 0 1 16 37 L22.500 25.750 A7.500 7.500 0 0 0 22.500 18.250 L16 14.500Z" fill="#fbbc04"/><circle cx="16" cy="22" r="7" fill="#fff"/><circle cx="16" cy="22" r="5.600" fill="#4285f4"/><circle cx="28.500" cy="10.500" r="9.300" fill="#8a5ad0"/><text x="28.500" y="14.800" text-anchor="middle" font-family="Liberation Sans, sans-serif" font-size="11.500" fill="#fff">K</text></svg>
<div class="dot" style="left:907px"></div>
<!-- acrobat -->
<svg class="abs" style="left:950px;top:15px" width="30" height="28" viewBox="0 0 30 28"><rect x="1" y="1" width="28" height="26" fill="#2a0a0a" stroke="#e0251a" stroke-width="1.800"/><path d="M7 22 Q12 18 14.500 10 Q15.500 5.500 14 5.500 Q12.500 6 14 11 Q16 17 23 18.500 Q25 18 22.500 17 Q14 17 7 22Z" fill="none" stroke="#fff" stroke-width="1.300"/></svg>
<div class="dot" style="left:962px"></div>
<!-- notepad -->
<svg class="abs" style="left:1007px;top:14px" width="26" height="32" viewBox="0 0 26 32"><rect x="0.500" y="3" width="25" height="27" rx="2" fill="#4cc3e6"/><rect x="0.500" y="26" width="25" height="4" fill="#d8a060"/><rect x="0.500" y="28.500" width="25" height="2" fill="#c07030"/><g fill="#2a7090"><rect x="4" y="1" width="2" height="4"/><rect x="9.300" y="1" width="2" height="4"/><rect x="14.600" y="1" width="2" height="4"/><rect x="20" y="1" width="2" height="4"/></g><g fill="#1a6a88"><rect x="4" y="9" width="18" height="2"/><rect x="4" y="13.500" width="18" height="2"/><rect x="4" y="18" width="18" height="2"/><rect x="4" y="22.500" width="18" height="2"/></g></svg>
<div class="dot" style="left:1017px"></div>
<!-- zoom -->
<svg class="abs" style="left:1059px;top:14px" width="31" height="31" viewBox="0 0 31 31"><rect x="0.500" y="0.500" width="30" height="30" rx="13" fill="#0b5cff"/><text x="15.500" y="18" text-anchor="middle" font-family="DejaVu Sans, sans-serif" font-weight="bold" font-size="7.500" fill="#fff" textLength="22" lengthAdjust="spacingAndGlyphs">zoom</text></svg>
<div class="dot" style="left:1072px"></div>
<!-- word -->
<svg class="abs" style="left:1114px;top:15px" width="30" height="30" viewBox="0 0 30 30"><defs><linearGradient id="wd" x1="0" y1="0" x2="0" y2="1"><stop offset="0" stop-color="#6ad0f8"/><stop offset=".45" stop-color="#2a7ae0"/><stop offset="1" stop-color="#123aa8"/></linearGradient></defs><rect x="6" y="1" width="22" height="27" rx="3" fill="url(#wd)"/><rect x="6" y="1" width="22" height="9" rx="3" fill="#6ad0f8"/><rect x="0.500" y="12" width="15" height="15" rx="2.500" fill="#1a48c0"/><text x="8" y="24" text-anchor="middle" font-family="Liberation Sans, sans-serif" font-weight="bold" font-size="11.500" fill="#fff">W</text></svg>
<div class="dot" style="left:1127px"></div>
<!-- tray -->
<svg class="abs" style="left:1241px;top:24px" width="16" height="12" viewBox="0 0 16 12"><path d="M1.500 9.500 L8 3 L14.500 9.500" fill="none" stroke="#fff" stroke-width="1.700" stroke-linecap="round" stroke-linejoin="round"/></svg>
<svg class="abs" style="left:1278px;top:21px" width="24" height="20" viewBox="0 0 24 20"><path d="M5 15 Q0.500 15 1 10.500 Q1.500 7 5 7 Q6 2 11 2 Q16 2 17 7 Q20.500 7 20.500 11 Q20.500 15 17 15Z" fill="#dcdcdc"/><path d="M5 15 Q0.500 15 1 10.500 Q1.500 7 5 7 Q8 7 9 10 Q12 9.500 12 15Z" fill="#a8a8a8"/><circle cx="16" cy="13.500" r="5.300" fill="#1a78e0"/><rect x="15.300" y="12.500" width="1.500" height="4" fill="#fff"/><circle cx="16" cy="10.700" r="0.900" fill="#fff"/></svg>
<svg class="abs" style="left:1316px;top:19px" width="28" height="22" viewBox="0 0 28 22"><g fill="none" stroke="#58c4f0" stroke-width="1.500" stroke-linecap="round" stroke-linejoin="round"><rect x="4" y="1" width="5" height="10" rx="2.500"/><path d="M1.500 8.500 Q1.500 14 6.500 14 Q11.500 14 11.500 8.500 M6.500 14 V17"/><path d="M26 8 L14.500 12.500 L19.500 14.500 L21.500 19.500Z"/></g></svg>
<svg class="abs" style="left:1358px;top:21px" width="22" height="18" viewBox="0 0 22 18"><g fill="none" stroke="#fff" stroke-width="1.600" stroke-linecap="round"><path d="M1.500 6.500 Q11 -2 20.500 6.500"/><path d="M4.800 10 Q11 4.500 17.200 10"/><path d="M8 13.300 Q11 10.800 14 13.300"/></g><circle cx="11" cy="15.800" r="1.500" fill="#fff"/></svg>
<svg class="abs" style="left:1388px;top:21px" width="22" height="18" viewBox="0 0 22 18"><path d="M1.500 6 H5 L10 1.500 V16.500 L5 12 H1.500Z" fill="none" stroke="#fff" stroke-width="1.500" stroke-linejoin="round"/><path d="M13 6 Q15 9 13 12 M15.500 3.500 Q19 9 15.500 14.500" fill="none" stroke="#fff" stroke-width="1.400" stroke-linecap="round"/><path d="M18 1.500 Q22.500 9 18 16.500" fill="none" stroke="#777" stroke-width="1.300" stroke-linecap="round"/></svg>
<svg class="abs" style="left:1418px;top:20px" width="27" height="18" viewBox="0 0 27 18"><rect x="1" y="4" width="22.500" height="12.500" rx="3.500" fill="none" stroke="#fff" stroke-width="1.500"/><rect x="3" y="6" width="18.500" height="8.500" rx="2" fill="#6ccb5f"/><path d="M24.500 8 Q26.500 8 26.500 10.200 Q26.500 12.500 24.500 12.500Z" fill="#fff"/><path d="M13.500 0.500 L8.500 9.500 H12 L10.500 15 L16 7.500 H12.500Z" fill="#fff" stroke="#1d1f21" stroke-width="0.800"/></svg>
<div id="batt" class="t" style="left:1448px;top:19px;font-size:15.500px;line-height:20px;color:#fff;letter-spacing:-0.862px">97%</div>
<div id="clk" class="t" style="right:25px;top:9px;font-size:15.500px;line-height:20px;color:#fff;text-align:right;letter-spacing:-0.599px">09:07</div>
<div id="dat" class="t" style="right:25px;top:30px;font-size:15.500px;line-height:20px;color:#fff;text-align:right;letter-spacing:0.036px">08/04/2026</div>
</div>
</div>
</body>
</html>
